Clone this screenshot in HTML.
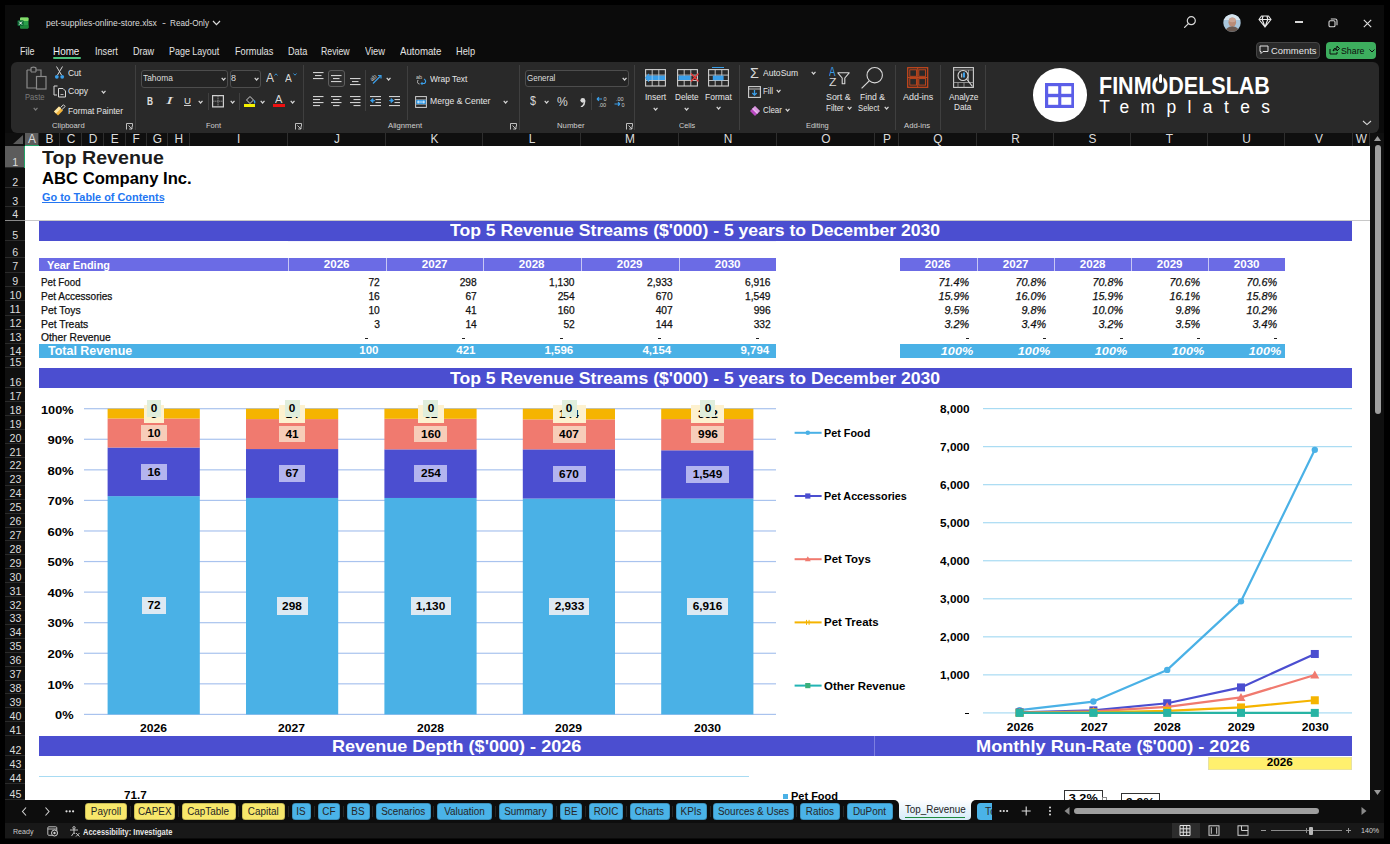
<!DOCTYPE html>
<html><head><meta charset="utf-8">
<style>
*{margin:0;padding:0;box-sizing:border-box}
html,body{width:1390px;height:844px;overflow:hidden;background:#000}
body{position:relative;font-family:"Liberation Sans",sans-serif}
.a{position:absolute}
.ui{color:#e6e6e6;font-size:11px;white-space:nowrap}
.t{position:absolute;white-space:nowrap;line-height:1}
.w{-webkit-text-stroke:0.25px currentColor}
.rib{position:absolute;left:11px;top:61.5px;width:1368px;height:71px;background:#292929;border-radius:6px}
.sep{position:absolute;width:1px;background:#3d3d3d}
.gl{position:absolute;font-size:9.5px;color:#d0d0d0;white-space:nowrap;line-height:1}
.ch{position:absolute;top:133px;height:13px;background:#0f0f0f;color:#d9d9d9;font-size:11px;text-align:center;line-height:13px;border-right:1px solid #333}
.rh{position:absolute;left:5px;width:20px;background:#0f0f0f;color:#d9d9d9;font-size:11px;text-align:center;border-bottom:1px solid #2d2d2d}
.cell{position:absolute;font-family:"Liberation Sans",sans-serif;white-space:nowrap;line-height:1}
.tab{position:absolute;top:802.5px;height:17.5px;border-radius:4px;font-size:11.5px;color:#1a1a1a;text-align:center;line-height:17.5px}
</style></head><body>

<div class="a" style="left:5px;top:5px;width:1379px;height:833.5px;background:#0b0b0b"></div>
<svg class="a" style="left:16.5px;top:16.5px" width="12" height="12" viewBox="0 0 12 12"><rect x="3" y="0.5" width="8.5" height="11" rx="1" fill="#2aa14a"/><rect x="3" y="0.5" width="8.5" height="3.6" rx="1" fill="#86dc6a"/><rect x="3" y="8" width="8.5" height="3.5" rx="1" fill="#1f8a3c"/><rect x="0.5" y="3.2" width="6.2" height="5.8" rx="1" fill="#0d6b35"/><path d="M2.2 4.6 L5 7.6 M5 4.6 L2.2 7.6" stroke="#fff" stroke-width="1"/></svg>
<div class="t" style="left:45.60px;top:17.90px;font-size:9.45px;color:#dcdcdc;transform:scaleX(0.9073);transform-origin:left;">pet-supplies-online-store.xlsx</div>
<div class="t" style="left:161.50px;top:17.90px;font-size:9.45px;color:#dcdcdc;transform:scaleX(1.2715);transform-origin:left;">-</div>
<div class="t" style="left:169.70px;top:17.90px;font-size:9.45px;color:#dcdcdc;transform:scaleX(0.8637);transform-origin:left;">Read-Only</div>
<svg class="a" style="left:212px;top:20px" width="9" height="6" viewBox="0 0 9 6"><path d="M1 1 L4.5 4.6 L8 1" stroke="#dcdcdc" stroke-width="1.2" fill="none"/></svg>
<svg class="a" style="left:1183px;top:15px" width="14" height="14" viewBox="0 0 14 14"><circle cx="8.3" cy="5.7" r="4" stroke="#d8d8d8" stroke-width="1.2" fill="none"/><path d="M5.4 8.6 L1.6 12.4" stroke="#d8d8d8" stroke-width="1.3" stroke-linecap="round"/></svg>
<svg class="a" style="left:1222.5px;top:13.5px" width="18" height="18" viewBox="0 0 18 18"><defs><clipPath id="av"><circle cx="9" cy="9" r="8.7"/></clipPath></defs><g clip-path="url(#av)"><rect width="18" height="18" fill="#a9c6dc"/><rect y="0" width="18" height="6" fill="#d6e4ee"/><ellipse cx="9.3" cy="8.2" rx="3.8" ry="4.8" fill="#b98c78"/><ellipse cx="9.3" cy="6" rx="3.4" ry="2.2" fill="#caa595"/><path d="M2 18 Q3 12.5 9.3 12.5 Q15.5 12.5 16.5 18 Z" fill="#6a5a52"/></g></svg>
<svg class="a" style="left:1258px;top:15px" width="14" height="13" viewBox="0 0 14 13"><path d="M3.5 1 H10.5 L13 4.5 L7 12 L1 4.5 Z M1 4.5 H13 M5 1 L4.2 4.5 L7 12 L9.8 4.5 L9 1" stroke="#e8e8e8" stroke-width="1.2" fill="none" stroke-linejoin="round"/></svg>
<div class="a" style="left:1295px;top:21.3px;width:7.6px;height:1.6px;background:#d8d8d8"></div>
<svg class="a" style="left:1328px;top:18px" width="10" height="10" viewBox="0 0 10 10"><rect x="1" y="2.8" width="6" height="6" rx="1.3" stroke="#d8d8d8" stroke-width="1.1" fill="none"/><path d="M2.8 1 H7.2 Q9 1 9 2.8 V7.2" stroke="#d8d8d8" stroke-width="1.1" fill="none"/></svg>
<svg class="a" style="left:1363px;top:18.5px" width="9" height="9" viewBox="0 0 9 9"><path d="M0.8 0.8 L8.2 8.2 M8.2 0.8 L0.8 8.2" stroke="#e0e0e0" stroke-width="1.1"/></svg>
<div class="t" style="left:20.30px;top:46.79px;font-size:10.17px;color:#e2e2e2;transform:scaleX(0.8845);transform-origin:left;">File</div>
<div class="t" style="left:53.40px;top:46.79px;font-size:10.17px;color:#f0f0f0;transform:scaleX(0.9728);transform-origin:left;">Home</div>
<div class="t" style="left:94.80px;top:46.79px;font-size:10.17px;color:#e2e2e2;transform:scaleX(0.8961);transform-origin:left;">Insert</div>
<div class="t" style="left:132.80px;top:46.79px;font-size:10.17px;color:#e2e2e2;transform:scaleX(0.8930);transform-origin:left;">Draw</div>
<div class="t" style="left:169.20px;top:46.79px;font-size:10.17px;color:#e2e2e2;transform:scaleX(0.8787);transform-origin:left;">Page Layout</div>
<div class="t" style="left:235.30px;top:46.79px;font-size:10.17px;color:#e2e2e2;transform:scaleX(0.9057);transform-origin:left;">Formulas</div>
<div class="t" style="left:287.70px;top:46.79px;font-size:10.17px;color:#e2e2e2;transform:scaleX(0.8981);transform-origin:left;">Data</div>
<div class="t" style="left:321.40px;top:46.79px;font-size:10.17px;color:#e2e2e2;transform:scaleX(0.8573);transform-origin:left;">Review</div>
<div class="t" style="left:365.00px;top:46.79px;font-size:10.17px;color:#e2e2e2;transform:scaleX(0.9146);transform-origin:left;">View</div>
<div class="t" style="left:399.60px;top:46.79px;font-size:10.17px;color:#e2e2e2;transform:scaleX(0.9530);transform-origin:left;">Automate</div>
<div class="t" style="left:455.70px;top:46.79px;font-size:10.17px;color:#e2e2e2;transform:scaleX(0.9128);transform-origin:left;">Help</div>
<div class="a" style="left:53.4px;top:57.3px;width:27.8px;height:1.8px;background:#4cc27a;border-radius:1px"></div>
<div class="a" style="left:1255.5px;top:41.5px;width:64px;height:17px;border-radius:4px;background:#2a2a2a;border:1px solid #454545"></div>
<svg class="a" style="left:1259px;top:45px" width="10" height="10" viewBox="0 0 10 10"><path d="M1 1 H9 V6.5 H4 L2 8.5 V6.5 H1 Z" stroke="#e0e0e0" stroke-width="1" fill="none" stroke-linejoin="round"/></svg>
<div class="t" style="left:1270.50px;top:45.93px;font-size:9.88px;color:#e6e6e6;transform:scaleX(0.9523);transform-origin:left;">Comments</div>
<div class="a" style="left:1326px;top:41.5px;width:50px;height:17px;border-radius:4px;background:#3dae5e"></div>
<svg class="a" style="left:1329px;top:45px" width="11" height="10" viewBox="0 0 11 10"><path d="M1 4 V9 H8 V7 M4 6 Q4 3 8 3 V1 L10.5 3.5 L8 6 V4.5 Q5.5 4.5 4 6" stroke="#0d0d0d" stroke-width="1" fill="none" stroke-linejoin="round"/></svg>
<div class="t" style="left:1341.00px;top:45.93px;font-size:9.88px;color:#0d0d0d;transform:scaleX(0.8911);transform-origin:left;">Share</div>
<svg class="a" style="left:1369px;top:49px" width="6" height="4" viewBox="0 0 6 4"><path d="M0.5 0.5 L3 3 L5.5 0.5" stroke="#0d0d0d" stroke-width="1" fill="none"/></svg>
<div class="rib"></div>
<svg class="a" style="left:25px;top:66px" width="23" height="25" viewBox="0 0 23 25"><path d="M2 4 H6 V2.5 Q6 1.2 8.5 1.2 Q11 1.2 11 2.5 V4 H16 V10" stroke="#8a8a8a" stroke-width="1.2" fill="none"/><path d="M2 4 V22 H11" stroke="#8a8a8a" stroke-width="1.2" fill="none"/><path d="M6 4 V6 H11 V4" stroke="#8a8a8a" stroke-width="1" fill="none"/><rect x="11.5" y="10.5" width="9.5" height="12.5" stroke="#8a8a8a" stroke-width="1.2" fill="none"/></svg>
<div class="t" style="left:24.70px;top:93.44px;font-size:8.58px;color:#7c7c7c;transform:scaleX(0.8893);transform-origin:left;">Paste</div>
<svg class="a" style="left:32.5px;top:106.5px" width="5.2" height="4" viewBox="0 0 5.2 4"><path d="M0.7 0.8 L2.6 3 L4.5 0.8" stroke="#7a7a7a" stroke-width="1.2" fill="none"/></svg>
<svg class="a" style="left:54px;top:66px" width="11" height="14" viewBox="0 0 11 14"><path d="M2.5 0.5 L7.5 9 M8.5 0.5 L3.5 9" stroke="#d8d8d8" stroke-width="1"/><circle cx="2.8" cy="10.8" r="1.9" fill="#3a9ee8"/><circle cx="8.2" cy="10.8" r="1.9" fill="#3a9ee8"/></svg>
<div class="t" style="left:67.90px;top:69.06px;font-size:8.43px;color:#e6e6e6;transform:scaleX(1.0062);transform-origin:left;">Cut</div>
<svg class="a" style="left:52.5px;top:85px" width="14" height="13" viewBox="0 0 14 13"><path d="M4.5 1 H1 V10 H4" stroke="#d8d8d8" stroke-width="1" fill="none"/><path d="M5.5 3.5 H10 L12.5 6 V12 H5.5 Z" stroke="#d8d8d8" stroke-width="1" fill="none"/><path d="M7.5 9.5 H10.5" stroke="#d8d8d8" stroke-width="0.8"/></svg>
<div class="t" style="left:67.90px;top:87.26px;font-size:8.43px;color:#e6e6e6;transform:scaleX(1.0214);transform-origin:left;">Copy</div>
<svg class="a" style="left:100.5px;top:89.8px" width="5.2" height="4" viewBox="0 0 5.2 4"><path d="M0.7 0.8 L2.6 3 L4.5 0.8" stroke="#d6d6d6" stroke-width="1.2" fill="none"/></svg>
<svg class="a" style="left:53px;top:103.5px" width="13" height="12" viewBox="0 0 13 12"><path d="M1 7.5 L6 2.5 L10 6.5 L5 11.5 Z" fill="#f2b43c"/><path d="M1 7.5 L6 2.5 L8 4.5 L3 9.5 Z" fill="#fce6a6"/><path d="M7.5 3.5 L10.5 0.8 L12.2 2.5 L9 5.5" stroke="#d8d8d8" stroke-width="1" fill="none"/></svg>
<div class="t" style="left:67.90px;top:106.56px;font-size:8.43px;color:#e6e6e6;transform:scaleX(0.9866);transform-origin:left;">Format Painter</div>
<div class="t" style="left:52.00px;top:121.68px;font-size:7.70px;color:#cfcfcf;transform:scaleX(0.9918);transform-origin:left;">Clipboard</div>
<svg class="a" style="left:126.2px;top:122.6px" width="7" height="7" viewBox="0 0 7 7"><path d="M0.5 6.5 V0.5 H6.5 V3.5" stroke="#cfcfcf" stroke-width="0.9" fill="none"/><path d="M2.5 2.5 L6 6 M3.2 6 H6 V3.2" stroke="#cfcfcf" stroke-width="0.9" fill="none"/></svg>
<div class="a" style="left:135.0px;top:64.5px;width:1px;height:65.5px;background:#3f3f3f"></div>
<div class="a" style="left:141.2px;top:70px;width:86.7px;height:17.5px;border:1px solid #4d4d4d;border-radius:3px;background:#242424"></div>
<div class="t" style="left:143.30px;top:74.03px;font-size:9.30px;color:#dedede;transform:scaleX(0.9036);transform-origin:left;">Tahoma</div>
<svg class="a" style="left:221.3px;top:77.2px" width="5.2" height="4" viewBox="0 0 5.2 4"><path d="M0.7 0.8 L2.6 3 L4.5 0.8" stroke="#d6d6d6" stroke-width="1.2" fill="none"/></svg>
<div class="a" style="left:229.6px;top:70px;width:31px;height:17.5px;border:1px solid #4d4d4d;border-radius:3px;background:#242424"></div>
<div class="t" style="left:231.00px;top:74.03px;font-size:9.30px;color:#dedede;transform:scaleX(0.9666);transform-origin:left;">8</div>
<svg class="a" style="left:253.7px;top:77.0px" width="5.2" height="4" viewBox="0 0 5.2 4"><path d="M0.7 0.8 L2.6 3 L4.5 0.8" stroke="#d6d6d6" stroke-width="1.2" fill="none"/></svg>
<div class="t" style="left:265.50px;top:71.03px;font-size:13.08px;color:#d8d8d8;transform:scaleX(0.9168);transform-origin:left;">A</div>
<svg class="a" style="left:273.5px;top:72.5px" width="4" height="3" viewBox="0 0 4 3"><path d="M0.5 2.5 L2 0.8 L3.5 2.5" stroke="#3a9ee8" stroke-width="0.9" fill="none"/></svg>
<div class="t" style="left:285.20px;top:72.75px;font-size:11.05px;color:#d8d8d8;transform:scaleX(0.9229);transform-origin:left;">A</div>
<svg class="a" style="left:292.5px;top:73px" width="4" height="3" viewBox="0 0 4 3"><path d="M0.5 0.5 L2 2.2 L3.5 0.5" stroke="#3a9ee8" stroke-width="0.9" fill="none"/></svg>
<div class="t" style="left:146.90px;top:95.72px;font-size:10.61px;color:#e0e0e0;font-weight:bold;transform:scaleX(0.7830);transform-origin:left;">B</div>
<div class="t" style="left:166.20px;top:95.72px;font-size:10.61px;color:#e0e0e0;font-style:italic;transform:scaleX(1.9337);transform-origin:left;font-family:'Liberation Serif'">I</div>
<div class="t" style="left:183.50px;top:95.83px;font-size:9.88px;color:#e0e0e0;transform:scaleX(0.9667);transform-origin:left;">U</div>
<div class="a" style="left:183.5px;top:105.4px;width:7px;height:0.9px;background:#d0d0d0"></div>
<svg class="a" style="left:198.4px;top:99.5px" width="5.2" height="4" viewBox="0 0 5.2 4"><path d="M0.7 0.8 L2.6 3 L4.5 0.8" stroke="#d6d6d6" stroke-width="1.2" fill="none"/></svg>
<div class="a" style="left:208.0px;top:93px;width:1px;height:17px;background:#3f3f3f"></div>
<svg class="a" style="left:212px;top:95px" width="12" height="12.5" viewBox="0 0 12 12.5"><path d="M0.6 0.6 H11.4 V11.9 H0.6 Z" stroke="#cfcfcf" stroke-width="1.2" fill="none"/><path d="M6 0.6 V11.9 M0.6 6.2 H11.4" stroke="#a8a8a8" stroke-width="0.9" stroke-dasharray="1.2 0.8"/></svg>
<svg class="a" style="left:230.0px;top:99.5px" width="5.2" height="4" viewBox="0 0 5.2 4"><path d="M0.7 0.8 L2.6 3 L4.5 0.8" stroke="#d6d6d6" stroke-width="1.2" fill="none"/></svg>
<div class="a" style="left:239.0px;top:93px;width:1px;height:17px;background:#3f3f3f"></div>
<svg class="a" style="left:244.5px;top:94.5px" width="11" height="9.5" viewBox="0 0 11 9.5"><path d="M1.5 5 L5 1.5 L8.5 5 L5 8.5 Z" stroke="#d0d0d0" stroke-width="1" fill="none"/><path d="M9 5.5 Q10.5 7.5 9.2 8.3" stroke="#3a9ee8" stroke-width="1.3" fill="none"/></svg>
<div class="a" style="left:243.9px;top:104.3px;width:11.5px;height:3.2px;background:#f4f000"></div>
<svg class="a" style="left:260.1px;top:99.5px" width="5.2" height="4" viewBox="0 0 5.2 4"><path d="M0.7 0.8 L2.6 3 L4.5 0.8" stroke="#d6d6d6" stroke-width="1.2" fill="none"/></svg>
<div class="t" style="left:275.00px;top:94.47px;font-size:10.90px;color:#d8d8d8;transform:scaleX(1.0177);transform-origin:left;">A</div>
<div class="a" style="left:272.9px;top:104.3px;width:11.9px;height:3.2px;background:#ee1111"></div>
<svg class="a" style="left:289.5px;top:99.5px" width="5.2" height="4" viewBox="0 0 5.2 4"><path d="M0.7 0.8 L2.6 3 L4.5 0.8" stroke="#d6d6d6" stroke-width="1.2" fill="none"/></svg>
<div class="t" style="left:205.70px;top:121.98px;font-size:7.70px;color:#cfcfcf;transform:scaleX(0.9732);transform-origin:left;">Font</div>
<svg class="a" style="left:294.5px;top:122.5px" width="7" height="7" viewBox="0 0 7 7"><path d="M0.5 6.5 V0.5 H6.5 V3.5" stroke="#cfcfcf" stroke-width="0.9" fill="none"/><path d="M2.5 2.5 L6 6 M3.2 6 H6 V3.2" stroke="#cfcfcf" stroke-width="0.9" fill="none"/></svg>
<div class="a" style="left:302.8px;top:64.5px;width:1px;height:65.5px;background:#3f3f3f"></div>
<svg class="a" style="left:312.5px;top:72.3px" width="12" height="12" viewBox="0 0 12 12"><rect x="0" y="0" width="10.5" height="1.1" fill="#d0d0d0"/><rect x="2" y="3" width="6.5" height="1.1" fill="#d0d0d0"/><rect x="0" y="6" width="10.5" height="1.1" fill="#d0d0d0"/></svg>
<div class="a" style="left:328.2px;top:70px;width:17.2px;height:17.4px;border:1px solid #5c5c5c;border-radius:3px;background:#2e2e2e"></div>
<svg class="a" style="left:331px;top:74.5px" width="12" height="12" viewBox="0 0 12 12"><rect x="0" y="0" width="10.5" height="1.1" fill="#d0d0d0"/><rect x="2" y="3" width="6.5" height="1.1" fill="#d0d0d0"/><rect x="0" y="6" width="10.5" height="1.1" fill="#d0d0d0"/></svg>
<svg class="a" style="left:350px;top:77.5px" width="12" height="12" viewBox="0 0 12 12"><rect x="0" y="0" width="10.5" height="1.1" fill="#d0d0d0"/><rect x="2" y="3" width="6.5" height="1.1" fill="#d0d0d0"/><rect x="0" y="6" width="10.5" height="1.1" fill="#d0d0d0"/></svg>
<div class="a" style="left:364.9px;top:70px;width:1px;height:41px;background:#3f3f3f"></div>
<svg class="a" style="left:369px;top:72px" width="14" height="13" viewBox="0 0 14 13"><text x="1" y="8" font-size="6" fill="#d0d0d0" font-family="Liberation Sans" transform="rotate(-45 4 6)">ab</text><path d="M4 11.5 L11.5 4" stroke="#3a9ee8" stroke-width="1.2"/><path d="M9 3.5 L12 3.5 L12 6.5" stroke="#3a9ee8" stroke-width="1.2" fill="none"/></svg>
<svg class="a" style="left:385.5px;top:76.7px" width="5.2" height="4" viewBox="0 0 5.2 4"><path d="M0.7 0.8 L2.6 3 L4.5 0.8" stroke="#d6d6d6" stroke-width="1.2" fill="none"/></svg>
<svg class="a" style="left:312.7px;top:96px" width="12" height="12" viewBox="0 0 12 12"><rect x="0" y="0" width="10.5" height="1.1" fill="#d0d0d0"/><rect x="0" y="3" width="7" height="1.1" fill="#d0d0d0"/><rect x="0" y="6" width="10.5" height="1.1" fill="#d0d0d0"/><rect x="0" y="9" width="7" height="1.1" fill="#d0d0d0"/></svg>
<svg class="a" style="left:331px;top:96px" width="12" height="12" viewBox="0 0 12 12"><rect x="0" y="0" width="10.5" height="1.1" fill="#d0d0d0"/><rect x="2" y="3" width="6.5" height="1.1" fill="#d0d0d0"/><rect x="0" y="6" width="10.5" height="1.1" fill="#d0d0d0"/><rect x="2" y="9" width="6.5" height="1.1" fill="#d0d0d0"/></svg>
<svg class="a" style="left:350px;top:96px" width="12" height="12" viewBox="0 0 12 12"><rect x="0" y="0" width="10.5" height="1.1" fill="#d0d0d0"/><rect x="3.5" y="3" width="7" height="1.1" fill="#d0d0d0"/><rect x="0" y="6" width="10.5" height="1.1" fill="#d0d0d0"/><rect x="3.5" y="9" width="7" height="1.1" fill="#d0d0d0"/></svg>
<div class="a" style="left:364.9px;top:93px;width:1px;height:17px;background:#3f3f3f"></div>
<svg class="a" style="left:370px;top:96px" width="12" height="11" viewBox="0 0 12 11"><rect x="0" y="0" width="11" height="1.1" fill="#d0d0d0"/><rect x="5.5" y="3" width="5.5" height="1.1" fill="#d0d0d0"/><rect x="5.5" y="6" width="5.5" height="1.1" fill="#d0d0d0"/><rect x="0" y="9" width="11" height="1.1" fill="#d0d0d0"/><path d="M0.5 4.6 L3 2.6 V6.6 Z M2.5 4.6 H5" fill="#3a9ee8" stroke="#3a9ee8" stroke-width="0.9"/></svg>
<svg class="a" style="left:389px;top:96px" width="12" height="11" viewBox="0 0 12 11"><rect x="0" y="0" width="11" height="1.1" fill="#d0d0d0"/><rect x="5.5" y="3" width="5.5" height="1.1" fill="#d0d0d0"/><rect x="5.5" y="6" width="5.5" height="1.1" fill="#d0d0d0"/><rect x="0" y="9" width="11" height="1.1" fill="#d0d0d0"/><path d="M4.5 4.6 L2 2.6 V6.6 Z M0 4.6 H2.5" fill="#3a9ee8" stroke="#3a9ee8" stroke-width="0.9"/></svg>
<div class="a" style="left:407.0px;top:66px;width:1px;height:54px;background:#3f3f3f"></div>
<svg class="a" style="left:416px;top:72.5px" width="12" height="12" viewBox="0 0 12 12"><text x="0" y="5.5" font-size="5.5" fill="#d0d0d0" font-family="Liberation Sans">ab</text><path d="M2 7 Q0.5 10.5 3.5 11" stroke="#c0c0c0" stroke-width="1" fill="none"/><path d="M8 6 Q11 8 8.5 10.5 H5" stroke="#3a9ee8" stroke-width="1.2" fill="none"/><path d="M6.5 9 L5 10.5 L6.5 12" stroke="#3a9ee8" stroke-width="1" fill="none"/></svg>
<div class="t" style="left:429.60px;top:74.56px;font-size:8.43px;color:#e6e6e6;transform:scaleX(0.9937);transform-origin:left;">Wrap Text</div>
<svg class="a" style="left:414.5px;top:95.5px" width="12" height="12" viewBox="0 0 12 12"><rect x="0.6" y="0.6" width="10.8" height="10.8" stroke="#d0d0d0" stroke-width="1" fill="none"/><rect x="1.2" y="3.8" width="9.6" height="4.4" fill="#3a9ee8"/><path d="M0.6 3.5 H11.4 M0.6 8.5 H11.4" stroke="#a0a0a0" stroke-width="0.6"/><path d="M2.5 6 H9.5 M2.5 6 L4 4.8 M2.5 6 L4 7.2 M9.5 6 L8 4.8 M9.5 6 L8 7.2" stroke="#fff" stroke-width="0.7" fill="none"/></svg>
<div class="t" style="left:429.60px;top:97.46px;font-size:8.43px;color:#e6e6e6;transform:scaleX(1.0168);transform-origin:left;">Merge &amp; Center</div>
<svg class="a" style="left:502.5px;top:100.0px" width="5.2" height="4" viewBox="0 0 5.2 4"><path d="M0.7 0.8 L2.6 3 L4.5 0.8" stroke="#d6d6d6" stroke-width="1.2" fill="none"/></svg>
<div class="t" style="left:388.00px;top:121.78px;font-size:7.70px;color:#cfcfcf;">Alignment</div>
<svg class="a" style="left:510px;top:122.6px" width="7" height="7" viewBox="0 0 7 7"><path d="M0.5 6.5 V0.5 H6.5 V3.5" stroke="#cfcfcf" stroke-width="0.9" fill="none"/><path d="M2.5 2.5 L6 6 M3.2 6 H6 V3.2" stroke="#cfcfcf" stroke-width="0.9" fill="none"/></svg>
<div class="a" style="left:518.8px;top:64.5px;width:1px;height:65.5px;background:#3f3f3f"></div>
<div class="a" style="left:525.3px;top:70px;width:104.1px;height:17.3px;border:1px solid #4d4d4d;border-radius:3px;background:#242424"></div>
<div class="t" style="left:526.80px;top:73.95px;font-size:9.16px;color:#dedede;transform:scaleX(0.8718);transform-origin:left;">General</div>
<svg class="a" style="left:622.4px;top:76.8px" width="5.2" height="4" viewBox="0 0 5.2 4"><path d="M0.7 0.8 L2.6 3 L4.5 0.8" stroke="#d6d6d6" stroke-width="1.2" fill="none"/></svg>
<div class="t" style="left:530.10px;top:95.14px;font-size:12.35px;color:#d8d8d8;transform:scaleX(0.8733);transform-origin:left;">$</div>
<svg class="a" style="left:544.3px;top:100.0px" width="5.2" height="4" viewBox="0 0 5.2 4"><path d="M0.7 0.8 L2.6 3 L4.5 0.8" stroke="#d6d6d6" stroke-width="1.2" fill="none"/></svg>
<div class="t" style="left:557.30px;top:94.58px;font-size:13.37px;color:#d8d8d8;transform:scaleX(0.9083);transform-origin:left;">%</div>
<svg class="a" style="left:578.5px;top:96.5px" width="7" height="10.5" viewBox="0 0 7 10.5"><circle cx="3.8" cy="3.3" r="2.4" fill="#d8d8d8"/><path d="M5.6 3.8 Q5.8 8 2 10" stroke="#d8d8d8" stroke-width="1.6" fill="none"/></svg>
<div class="a" style="left:590.9px;top:93px;width:1px;height:17px;background:#3f3f3f"></div>
<svg class="a" style="left:596px;top:96px" width="12.5" height="11" viewBox="0 0 12.5 11"><path d="M1 3 H6 M1 3 L3 1.2 M1 3 L3 4.8" stroke="#3a9ee8" stroke-width="1.2" fill="none"/><text x="7.5" y="5" font-size="5.5" fill="#d0d0d0" font-family="Liberation Sans">0</text><text x="2.5" y="10.5" font-size="5.5" fill="#d0d0d0" font-family="Liberation Sans">.00</text></svg>
<svg class="a" style="left:614px;top:96px" width="12.5" height="11" viewBox="0 0 12.5 11"><text x="2" y="5" font-size="5.5" fill="#d0d0d0" font-family="Liberation Sans">.00</text><path d="M0.5 8 H6 M6 8 L4 6.2 M6 8 L4 9.8" stroke="#3a9ee8" stroke-width="1.2" fill="none"/><text x="7.5" y="10.5" font-size="5.5" fill="#d0d0d0" font-family="Liberation Sans">0</text></svg>
<div class="t" style="left:556.90px;top:121.78px;font-size:7.70px;color:#cfcfcf;transform:scaleX(1.0074);transform-origin:left;">Number</div>
<svg class="a" style="left:626px;top:122.6px" width="7" height="7" viewBox="0 0 7 7"><path d="M0.5 6.5 V0.5 H6.5 V3.5" stroke="#cfcfcf" stroke-width="0.9" fill="none"/><path d="M2.5 2.5 L6 6 M3.2 6 H6 V3.2" stroke="#cfcfcf" stroke-width="0.9" fill="none"/></svg>
<div class="a" style="left:634.1px;top:64.5px;width:1px;height:65.5px;background:#3f3f3f"></div>
<svg class="a" style="left:645.2px;top:69px" width="24" height="19" viewBox="0 0 24 19"><rect x="0.6" y="0.6" width="19.8" height="16.4" stroke="#cfcfcf" stroke-width="1.1" fill="none"/><path d="M7.2 0.6 V17 M13.8 0.6 V17 M0.6 6.1 H20.4 M0.6 11.5 H20.4" stroke="#cfcfcf" stroke-width="0.9"/><rect x="1.5" y="6.6" width="18.5" height="4.4" fill="#3a9ee8"/><path d="M4 5 L0.8 8.8 L4 12.6" stroke="#3a9ee8" stroke-width="1.2" fill="none"/><path d="M7.2 6.6 V11 M13.8 6.6 V11" stroke="#bcdcf8" stroke-width="0.6"/></svg>
<div class="t" style="left:645.20px;top:93.46px;font-size:8.43px;color:#e6e6e6;transform:scaleX(1.0056);transform-origin:left;">Insert</div>
<svg class="a" style="left:652.5px;top:106.7px" width="5.2" height="4" viewBox="0 0 5.2 4"><path d="M0.7 0.8 L2.6 3 L4.5 0.8" stroke="#d6d6d6" stroke-width="1.2" fill="none"/></svg>
<svg class="a" style="left:676.7px;top:69px" width="24" height="19" viewBox="0 0 24 19"><rect x="0.6" y="0.6" width="19.8" height="16.4" stroke="#cfcfcf" stroke-width="1.1" fill="none"/><path d="M7.2 0.6 V17 M13.8 0.6 V17 M0.6 6.1 H20.4 M0.6 11.5 H20.4" stroke="#cfcfcf" stroke-width="0.9"/><rect x="1.5" y="6.6" width="12" height="4.4" fill="#3a9ee8"/><path d="M14 4.5 L21.5 12.5 M21.5 4.5 L14 12.5" stroke="#e83a3a" stroke-width="1.3"/></svg>
<div class="t" style="left:675.10px;top:93.46px;font-size:8.43px;color:#e6e6e6;transform:scaleX(0.9685);transform-origin:left;">Delete</div>
<svg class="a" style="left:684.0px;top:106.7px" width="5.2" height="4" viewBox="0 0 5.2 4"><path d="M0.7 0.8 L2.6 3 L4.5 0.8" stroke="#d6d6d6" stroke-width="1.2" fill="none"/></svg>
<svg class="a" style="left:708.3px;top:69px" width="24" height="19" viewBox="0 0 24 19"><rect x="0.6" y="0.6" width="19.8" height="16.4" stroke="#cfcfcf" stroke-width="1.1" fill="none"/><path d="M7.2 0.6 V17 M13.8 0.6 V17 M0.6 6.1 H20.4 M0.6 11.5 H20.4" stroke="#cfcfcf" stroke-width="0.9"/><rect x="4.8" y="6.6" width="10.8" height="4.6" fill="#3a9ee8"/></svg>
<div class="a" style="left:712px;top:66.6px;width:12px;height:1.2px;background:#3a9ee8"></div>
<div class="t" style="left:705.40px;top:92.66px;font-size:8.43px;color:#e6e6e6;transform:scaleX(1.0076);transform-origin:left;">Format</div>
<svg class="a" style="left:715.5px;top:105.7px" width="5.2" height="4" viewBox="0 0 5.2 4"><path d="M0.7 0.8 L2.6 3 L4.5 0.8" stroke="#d6d6d6" stroke-width="1.2" fill="none"/></svg>
<div class="t" style="left:678.80px;top:121.88px;font-size:7.70px;color:#cfcfcf;transform:scaleX(0.9461);transform-origin:left;">Cells</div>
<div class="a" style="left:738.9px;top:64.5px;width:1px;height:65.5px;background:#3f3f3f"></div>
<div class="t" style="left:749.80px;top:65.90px;font-size:14.53px;color:#d8d8d8;transform:scaleX(0.9906);transform-origin:left;">Σ</div>
<div class="t" style="left:762.90px;top:69.36px;font-size:8.43px;color:#e6e6e6;transform:scaleX(1.0180);transform-origin:left;">AutoSum</div>
<svg class="a" style="left:811.4px;top:71.2px" width="5.2" height="4" viewBox="0 0 5.2 4"><path d="M0.7 0.8 L2.6 3 L4.5 0.8" stroke="#d6d6d6" stroke-width="1.2" fill="none"/></svg>
<svg class="a" style="left:747.5px;top:85.5px" width="13.5" height="12" viewBox="0 0 13.5 12"><rect x="0.6" y="0.6" width="11.8" height="10.8" stroke="#cfcfcf" stroke-width="1.1" fill="none"/><path d="M0.6 3 H12.4" stroke="#cfcfcf" stroke-width="0.9"/><path d="M6.5 4 V9 M4.3 7 L6.5 9.2 L8.7 7" stroke="#3a9ee8" stroke-width="1.3" fill="none"/></svg>
<div class="t" style="left:763.20px;top:87.16px;font-size:8.43px;color:#e6e6e6;transform:scaleX(0.9287);transform-origin:left;">Fill</div>
<svg class="a" style="left:775.7px;top:89.2px" width="5.2" height="4" viewBox="0 0 5.2 4"><path d="M0.7 0.8 L2.6 3 L4.5 0.8" stroke="#d6d6d6" stroke-width="1.2" fill="none"/></svg>
<svg class="a" style="left:748.5px;top:104.5px" width="12" height="11.5" viewBox="0 0 12 11.5"><path d="M1 6 L6 1 L11 6 L6 11 Z" fill="#b848c0"/><path d="M3.5 3.5 L8.5 8.5" stroke="#e8b8ef" stroke-width="1.2"/><path d="M6 1 L11 6 L8.5 8.5 L3.5 3.5 Z" fill="#f0d0f4" opacity="0.6"/></svg>
<div class="t" style="left:762.90px;top:106.16px;font-size:8.43px;color:#e6e6e6;transform:scaleX(0.9382);transform-origin:left;">Clear</div>
<svg class="a" style="left:784.7px;top:108.2px" width="5.2" height="4" viewBox="0 0 5.2 4"><path d="M0.7 0.8 L2.6 3 L4.5 0.8" stroke="#d6d6d6" stroke-width="1.2" fill="none"/></svg>
<div class="t" style="left:829.20px;top:66.29px;font-size:12.06px;color:#3a9ee8;transform:scaleX(0.8078);transform-origin:left;">A</div>
<div class="t" style="left:829.20px;top:76.46px;font-size:11.63px;color:#d8d8d8;transform:scaleX(1.0560);transform-origin:left;">Z</div>
<svg class="a" style="left:836.5px;top:72px" width="13" height="12.5" viewBox="0 0 13 12.5"><path d="M0.8 0.8 H12.2 L7.8 6 V11.8 H5.2 V6 Z" stroke="#d8d8d8" stroke-width="1.1" fill="none" stroke-linejoin="round"/></svg>
<div class="t" style="left:826.40px;top:92.76px;font-size:8.43px;color:#e6e6e6;transform:scaleX(1.0501);transform-origin:left;">Sort &amp;</div>
<div class="t" style="left:825.90px;top:103.96px;font-size:8.43px;color:#e6e6e6;transform:scaleX(0.9502);transform-origin:left;">Filter</div>
<svg class="a" style="left:847.1px;top:106.2px" width="5.2" height="4" viewBox="0 0 5.2 4"><path d="M0.7 0.8 L2.6 3 L4.5 0.8" stroke="#d6d6d6" stroke-width="1.2" fill="none"/></svg>
<svg class="a" style="left:860px;top:66px" width="24" height="24" viewBox="0 0 24 24"><circle cx="14.7" cy="9.2" r="7.7" stroke="#d8d8d8" stroke-width="1.1" fill="none"/><path d="M9.2 14.8 L1.6 22.4" stroke="#d8d8d8" stroke-width="1.2"/></svg>
<div class="t" style="left:859.90px;top:92.76px;font-size:8.43px;color:#e6e6e6;transform:scaleX(1.0261);transform-origin:left;">Find &amp;</div>
<div class="t" style="left:858.00px;top:103.96px;font-size:8.43px;color:#e6e6e6;transform:scaleX(0.9134);transform-origin:left;">Select</div>
<svg class="a" style="left:883.5px;top:106.2px" width="5.2" height="4" viewBox="0 0 5.2 4"><path d="M0.7 0.8 L2.6 3 L4.5 0.8" stroke="#d6d6d6" stroke-width="1.2" fill="none"/></svg>
<div class="t" style="left:805.80px;top:121.78px;font-size:7.70px;color:#cfcfcf;transform:scaleX(0.9680);transform-origin:left;">Editing</div>
<div class="a" style="left:894.5px;top:64.5px;width:1px;height:65.5px;background:#3f3f3f"></div>
<svg class="a" style="left:907px;top:67px" width="21.5" height="21" viewBox="0 0 21.5 21"><rect x="0.7" y="0.7" width="20" height="19.6" stroke="#c9481c" stroke-width="1.2" fill="none"/><rect x="2.8" y="2.8" width="6.8" height="6.5" stroke="#c9481c" stroke-width="0.9" fill="none"/><rect x="11.8" y="2.8" width="6.8" height="6.5" stroke="#c9481c" stroke-width="0.9" fill="none"/><rect x="2.8" y="11.6" width="6.8" height="6.5" stroke="#c9481c" stroke-width="0.9" fill="none"/><rect x="11.8" y="11.6" width="6.8" height="6.5" stroke="#c9481c" stroke-width="0.9" fill="none"/><path d="M10.7 0.7 V20.3 M0.7 10.5 H20.7" stroke="#c9481c" stroke-width="0.9"/></svg>
<div class="t" style="left:902.90px;top:92.66px;font-size:8.43px;color:#e6e6e6;transform:scaleX(1.0601);transform-origin:left;">Add-ins</div>
<div class="t" style="left:904.10px;top:121.88px;font-size:7.70px;color:#cfcfcf;">Add-ins</div>
<div class="a" style="left:940.1px;top:64.5px;width:1px;height:65.5px;background:#3f3f3f"></div>
<svg class="a" style="left:952.5px;top:67px" width="21" height="21" viewBox="0 0 21 21"><rect x="0.6" y="0.6" width="19.8" height="19.8" stroke="#cfcfcf" stroke-width="1.1" fill="none"/><path d="M0.6 3 H20.4 M0.6 15.5 H20.4 M5 15.5 V20.4 M11 15.5 V20.4 M15.5 3 V15.5" stroke="#a8a8a8" stroke-width="0.8"/><circle cx="10" cy="8.5" r="5" stroke="#d8d8d8" stroke-width="1.1" fill="#2a2a2a"/><path d="M13.6 12 L19.5 19.5" stroke="#d8d8d8" stroke-width="1.2"/><rect x="8" y="6.5" width="1.3" height="4" fill="#bbb"/><rect x="10" y="5.5" width="2" height="5" fill="#3a9ee8"/></svg>
<div class="t" style="left:948.50px;top:92.66px;font-size:8.43px;color:#e6e6e6;transform:scaleX(0.9836);transform-origin:left;">Analyze</div>
<div class="t" style="left:954.30px;top:103.36px;font-size:8.43px;color:#e6e6e6;transform:scaleX(0.9772);transform-origin:left;">Data</div>
<div class="a" style="left:984.5px;top:64.5px;width:1px;height:65.5px;background:#3f3f3f"></div>
<div class="a" style="left:1032.6px;top:68.2px;width:54.4px;height:54px;border-radius:50%;background:#fff"></div>
<svg class="a" style="left:1044.9px;top:82.8px" width="29.5" height="25" viewBox="0 0 29.5 25"><rect x="0" y="0" width="29.5" height="25" fill="#5b5ee8"/><rect x="3.2" y="3.2" width="10" height="7.6" fill="#fff"/><rect x="16.3" y="3.2" width="10" height="7.6" fill="#fff"/><rect x="3.2" y="14.2" width="10" height="7.6" fill="#fff"/><rect x="16.3" y="14.2" width="10" height="7.6" fill="#fff"/></svg>
<div class="t" style="left:1099.30px;top:74.35px;font-size:24.27px;color:#fff;font-weight:bold;transform:scaleX(0.8863);transform-origin:left;">FINMODELSLAB</div>
<div class="t" style="left:1099.30px;top:98.94px;font-size:17.44px;color:#fff;letter-spacing:11.4px">Templates</div>
<div class="a" style="left:1158.64px;top:73.8px;width:3.2px;height:9px;background:#fff;border-radius:1.5px;box-shadow:0 0 0 1.3px #292929"></div>
<svg class="a" style="left:1362px;top:120px" width="10" height="6" viewBox="0 0 10 6"><path d="M1 1 L5 4.6 L9 1" stroke="#d8d8d8" stroke-width="1.1" fill="none"/></svg>
<div class="a" style="left:5px;top:133px;width:1365px;height:13px;background:#0f0f0f"></div>
<div class="a" style="left:5px;top:146px;width:20px;height:654px;background:#0f0f0f"></div>
<div class="a" style="left:25px;top:146px;width:1345px;height:654px;background:#fff"></div>
<svg class="a" style="left:11px;top:134px" width="13" height="11" viewBox="0 0 13 11"><path d="M12 1 V10 H2 Z" fill="#5a5a5a"/></svg>
<div class="a" style="left:25px;top:133px;width:14px;height:13px;background:#5c5c5c;border-right:1px solid #2e2e2e"></div>
<div class="t" style="left:28.02px;top:134.11px;font-size:11.92px;color:#dcdcdc;">A</div>
<div class="a" style="left:39px;top:133px;width:21px;height:13px;background:#0f0f0f;border-right:1px solid #2e2e2e"></div>
<div class="t" style="left:45.52px;top:134.11px;font-size:11.92px;color:#dcdcdc;">B</div>
<div class="a" style="left:60px;top:133px;width:22px;height:13px;background:#0f0f0f;border-right:1px solid #2e2e2e"></div>
<div class="t" style="left:66.70px;top:134.11px;font-size:11.92px;color:#dcdcdc;">C</div>
<div class="a" style="left:82px;top:133px;width:22px;height:13px;background:#0f0f0f;border-right:1px solid #2e2e2e"></div>
<div class="t" style="left:88.70px;top:134.11px;font-size:11.92px;color:#dcdcdc;">D</div>
<div class="a" style="left:104px;top:133px;width:21.5px;height:13px;background:#0f0f0f;border-right:1px solid #2e2e2e"></div>
<div class="t" style="left:110.77px;top:134.11px;font-size:11.92px;color:#dcdcdc;">E</div>
<div class="a" style="left:125.5px;top:133px;width:21.5px;height:13px;background:#0f0f0f;border-right:1px solid #2e2e2e"></div>
<div class="t" style="left:132.61px;top:134.11px;font-size:11.92px;color:#dcdcdc;">F</div>
<div class="a" style="left:147px;top:133px;width:21px;height:13px;background:#0f0f0f;border-right:1px solid #2e2e2e"></div>
<div class="t" style="left:152.86px;top:134.11px;font-size:11.92px;color:#dcdcdc;">G</div>
<div class="a" style="left:168px;top:133px;width:21.5px;height:13px;background:#0f0f0f;border-right:1px solid #2e2e2e"></div>
<div class="t" style="left:174.45px;top:134.11px;font-size:11.92px;color:#dcdcdc;">H</div>
<div class="a" style="left:189.5px;top:133px;width:98.5px;height:13px;background:#0f0f0f;border-right:1px solid #2e2e2e"></div>
<div class="t" style="left:237.09px;top:134.11px;font-size:11.92px;color:#dcdcdc;">I</div>
<div class="a" style="left:288px;top:133px;width:98px;height:13px;background:#0f0f0f;border-right:1px solid #2e2e2e"></div>
<div class="t" style="left:334.02px;top:134.11px;font-size:11.92px;color:#dcdcdc;">J</div>
<div class="a" style="left:386px;top:133px;width:97px;height:13px;background:#0f0f0f;border-right:1px solid #2e2e2e"></div>
<div class="t" style="left:430.52px;top:134.11px;font-size:11.92px;color:#dcdcdc;">K</div>
<div class="a" style="left:483px;top:133px;width:98px;height:13px;background:#0f0f0f;border-right:1px solid #2e2e2e"></div>
<div class="t" style="left:528.69px;top:134.11px;font-size:11.92px;color:#dcdcdc;">L</div>
<div class="a" style="left:581px;top:133px;width:98px;height:13px;background:#0f0f0f;border-right:1px solid #2e2e2e"></div>
<div class="t" style="left:625.04px;top:134.11px;font-size:11.92px;color:#dcdcdc;">M</div>
<div class="a" style="left:679px;top:133px;width:98px;height:13px;background:#0f0f0f;border-right:1px solid #2e2e2e"></div>
<div class="t" style="left:723.70px;top:134.11px;font-size:11.92px;color:#dcdcdc;">N</div>
<div class="a" style="left:777px;top:133px;width:98px;height:13px;background:#0f0f0f;border-right:1px solid #2e2e2e"></div>
<div class="t" style="left:821.36px;top:134.11px;font-size:11.92px;color:#dcdcdc;">O</div>
<div class="a" style="left:875px;top:133px;width:24px;height:13px;background:#0f0f0f;border-right:1px solid #2e2e2e"></div>
<div class="t" style="left:883.02px;top:134.11px;font-size:11.92px;color:#dcdcdc;">P</div>
<div class="a" style="left:899px;top:133px;width:78px;height:13px;background:#0f0f0f;border-right:1px solid #2e2e2e"></div>
<div class="t" style="left:933.36px;top:134.11px;font-size:11.92px;color:#dcdcdc;">Q</div>
<div class="a" style="left:977px;top:133px;width:77px;height:13px;background:#0f0f0f;border-right:1px solid #2e2e2e"></div>
<div class="t" style="left:1011.20px;top:134.11px;font-size:11.92px;color:#dcdcdc;">R</div>
<div class="a" style="left:1054px;top:133px;width:77px;height:13px;background:#0f0f0f;border-right:1px solid #2e2e2e"></div>
<div class="t" style="left:1088.52px;top:134.11px;font-size:11.92px;color:#dcdcdc;">S</div>
<div class="a" style="left:1131px;top:133px;width:77px;height:13px;background:#0f0f0f;border-right:1px solid #2e2e2e"></div>
<div class="t" style="left:1165.86px;top:134.11px;font-size:11.92px;color:#dcdcdc;">T</div>
<div class="a" style="left:1208px;top:133px;width:77px;height:13px;background:#0f0f0f;border-right:1px solid #2e2e2e"></div>
<div class="t" style="left:1242.20px;top:134.11px;font-size:11.92px;color:#dcdcdc;">U</div>
<div class="a" style="left:1285px;top:133px;width:68px;height:13px;background:#0f0f0f;border-right:1px solid #2e2e2e"></div>
<div class="t" style="left:1315.02px;top:134.11px;font-size:11.92px;color:#dcdcdc;">V</div>
<div class="a" style="left:1353px;top:133px;width:17px;height:13px;background:#0f0f0f;border-right:1px solid #2e2e2e"></div>
<div class="t" style="left:1355.87px;top:134.11px;font-size:11.92px;color:#dcdcdc;">W</div>
<div class="a" style="left:25px;top:145px;width:14px;height:1px;background:#21a366"></div>
<div class="a" style="left:5px;top:146px;width:20px;height:22px;background:#5c5c5c;border-bottom:1px solid #2a2a2a"></div>
<div class="t" style="left:11.97px;top:155.56px;font-size:11.63px;color:#dcdcdc;transform:scaleX(0.9200);transform-origin:center;">1</div>
<div class="a" style="left:5px;top:168px;width:20px;height:20px;background:#0f0f0f;border-bottom:1px solid #2a2a2a"></div>
<div class="t" style="left:11.97px;top:175.56px;font-size:11.63px;color:#dcdcdc;transform:scaleX(0.9200);transform-origin:center;">2</div>
<div class="a" style="left:5px;top:188px;width:20px;height:19px;background:#0f0f0f;border-bottom:1px solid #2a2a2a"></div>
<div class="t" style="left:11.97px;top:194.56px;font-size:11.63px;color:#dcdcdc;transform:scaleX(0.9200);transform-origin:center;">3</div>
<div class="a" style="left:5px;top:207px;width:20px;height:13.5px;background:#0f0f0f;border-bottom:1px solid #2a2a2a"></div>
<div class="t" style="left:11.97px;top:208.06px;font-size:11.63px;color:#dcdcdc;transform:scaleX(0.9200);transform-origin:center;">4</div>
<div class="a" style="left:5px;top:220.5px;width:20px;height:20.5px;background:#0f0f0f;border-bottom:1px solid #2a2a2a"></div>
<div class="t" style="left:11.97px;top:228.56px;font-size:11.63px;color:#dcdcdc;transform:scaleX(0.9200);transform-origin:center;">5</div>
<div class="a" style="left:5px;top:241px;width:20px;height:17px;background:#0f0f0f;border-bottom:1px solid #2a2a2a"></div>
<div class="t" style="left:11.97px;top:245.56px;font-size:11.63px;color:#dcdcdc;transform:scaleX(0.9200);transform-origin:center;">6</div>
<div class="a" style="left:5px;top:258px;width:20px;height:14.699999999999989px;background:#0f0f0f;border-bottom:1px solid #2a2a2a"></div>
<div class="t" style="left:11.97px;top:260.26px;font-size:11.63px;color:#dcdcdc;transform:scaleX(0.9200);transform-origin:center;">7</div>
<div class="a" style="left:5px;top:272.7px;width:20px;height:14.300000000000011px;background:#0f0f0f;border-bottom:1px solid #2a2a2a"></div>
<div class="t" style="left:11.97px;top:274.56px;font-size:11.63px;color:#dcdcdc;transform:scaleX(0.9200);transform-origin:center;">9</div>
<div class="a" style="left:5px;top:287px;width:20px;height:14.199999999999989px;background:#0f0f0f;border-bottom:1px solid #2a2a2a"></div>
<div class="t" style="left:8.73px;top:288.76px;font-size:11.63px;color:#dcdcdc;transform:scaleX(0.9200);transform-origin:center;">10</div>
<div class="a" style="left:5px;top:301.2px;width:20px;height:14.5px;background:#0f0f0f;border-bottom:1px solid #2a2a2a"></div>
<div class="t" style="left:9.17px;top:303.26px;font-size:11.63px;color:#dcdcdc;transform:scaleX(0.9200);transform-origin:center;">11</div>
<div class="a" style="left:5px;top:315.7px;width:20px;height:13.900000000000034px;background:#0f0f0f;border-bottom:1px solid #2a2a2a"></div>
<div class="t" style="left:8.73px;top:317.16px;font-size:11.63px;color:#dcdcdc;transform:scaleX(0.9200);transform-origin:center;">12</div>
<div class="a" style="left:5px;top:329.6px;width:20px;height:14.199999999999989px;background:#0f0f0f;border-bottom:1px solid #2a2a2a"></div>
<div class="t" style="left:8.73px;top:331.36px;font-size:11.63px;color:#dcdcdc;transform:scaleX(0.9200);transform-origin:center;">13</div>
<div class="a" style="left:5px;top:343.8px;width:20px;height:13.599999999999966px;background:#0f0f0f;border-bottom:1px solid #2a2a2a"></div>
<div class="t" style="left:8.73px;top:344.96px;font-size:11.63px;color:#dcdcdc;transform:scaleX(0.9200);transform-origin:center;">14</div>
<div class="a" style="left:5px;top:357.4px;width:20px;height:10.800000000000011px;background:#0f0f0f;border-bottom:1px solid #2a2a2a"></div>
<div class="t" style="left:8.73px;top:355.76px;font-size:11.63px;color:#dcdcdc;transform:scaleX(0.9200);transform-origin:center;">15</div>
<div class="a" style="left:5px;top:368.2px;width:20px;height:20.19999999999999px;background:#0f0f0f;border-bottom:1px solid #2a2a2a"></div>
<div class="t" style="left:8.73px;top:375.96px;font-size:11.63px;color:#dcdcdc;transform:scaleX(0.9200);transform-origin:center;">16</div>
<div class="a" style="left:5px;top:388.4px;width:20px;height:13.911999999999978px;background:#0f0f0f;border-bottom:1px solid #2a2a2a"></div>
<div class="t" style="left:8.73px;top:389.87px;font-size:11.63px;color:#dcdcdc;transform:scaleX(0.9200);transform-origin:center;">17</div>
<div class="a" style="left:5px;top:402.31199999999995px;width:20px;height:13.911999999999978px;background:#0f0f0f;border-bottom:1px solid #2a2a2a"></div>
<div class="t" style="left:8.73px;top:403.78px;font-size:11.63px;color:#dcdcdc;transform:scaleX(0.9200);transform-origin:center;">18</div>
<div class="a" style="left:5px;top:416.22399999999993px;width:20px;height:13.911999999999978px;background:#0f0f0f;border-bottom:1px solid #2a2a2a"></div>
<div class="t" style="left:8.73px;top:417.69px;font-size:11.63px;color:#dcdcdc;transform:scaleX(0.9200);transform-origin:center;">19</div>
<div class="a" style="left:5px;top:430.1359999999999px;width:20px;height:13.911999999999978px;background:#0f0f0f;border-bottom:1px solid #2a2a2a"></div>
<div class="t" style="left:8.73px;top:431.60px;font-size:11.63px;color:#dcdcdc;transform:scaleX(0.9200);transform-origin:center;">20</div>
<div class="a" style="left:5px;top:444.0479999999999px;width:20px;height:13.911999999999978px;background:#0f0f0f;border-bottom:1px solid #2a2a2a"></div>
<div class="t" style="left:8.73px;top:445.52px;font-size:11.63px;color:#dcdcdc;transform:scaleX(0.9200);transform-origin:center;">21</div>
<div class="a" style="left:5px;top:457.95999999999987px;width:20px;height:13.911999999999978px;background:#0f0f0f;border-bottom:1px solid #2a2a2a"></div>
<div class="t" style="left:8.73px;top:459.43px;font-size:11.63px;color:#dcdcdc;transform:scaleX(0.9200);transform-origin:center;">22</div>
<div class="a" style="left:5px;top:471.87199999999984px;width:20px;height:13.911999999999978px;background:#0f0f0f;border-bottom:1px solid #2a2a2a"></div>
<div class="t" style="left:8.73px;top:473.34px;font-size:11.63px;color:#dcdcdc;transform:scaleX(0.9200);transform-origin:center;">23</div>
<div class="a" style="left:5px;top:485.7839999999998px;width:20px;height:13.911999999999978px;background:#0f0f0f;border-bottom:1px solid #2a2a2a"></div>
<div class="t" style="left:8.73px;top:487.25px;font-size:11.63px;color:#dcdcdc;transform:scaleX(0.9200);transform-origin:center;">24</div>
<div class="a" style="left:5px;top:499.6959999999998px;width:20px;height:13.912000000000035px;background:#0f0f0f;border-bottom:1px solid #2a2a2a"></div>
<div class="t" style="left:8.73px;top:501.16px;font-size:11.63px;color:#dcdcdc;transform:scaleX(0.9200);transform-origin:center;">25</div>
<div class="a" style="left:5px;top:513.6079999999998px;width:20px;height:13.912000000000035px;background:#0f0f0f;border-bottom:1px solid #2a2a2a"></div>
<div class="t" style="left:8.73px;top:515.08px;font-size:11.63px;color:#dcdcdc;transform:scaleX(0.9200);transform-origin:center;">26</div>
<div class="a" style="left:5px;top:527.5199999999999px;width:20px;height:13.912000000000035px;background:#0f0f0f;border-bottom:1px solid #2a2a2a"></div>
<div class="t" style="left:8.73px;top:528.99px;font-size:11.63px;color:#dcdcdc;transform:scaleX(0.9200);transform-origin:center;">27</div>
<div class="a" style="left:5px;top:541.4319999999999px;width:20px;height:13.912000000000035px;background:#0f0f0f;border-bottom:1px solid #2a2a2a"></div>
<div class="t" style="left:8.73px;top:542.90px;font-size:11.63px;color:#dcdcdc;transform:scaleX(0.9200);transform-origin:center;">28</div>
<div class="a" style="left:5px;top:555.3439999999999px;width:20px;height:13.912000000000035px;background:#0f0f0f;border-bottom:1px solid #2a2a2a"></div>
<div class="t" style="left:8.73px;top:556.81px;font-size:11.63px;color:#dcdcdc;transform:scaleX(0.9200);transform-origin:center;">29</div>
<div class="a" style="left:5px;top:569.256px;width:20px;height:13.912000000000035px;background:#0f0f0f;border-bottom:1px solid #2a2a2a"></div>
<div class="t" style="left:8.73px;top:570.72px;font-size:11.63px;color:#dcdcdc;transform:scaleX(0.9200);transform-origin:center;">30</div>
<div class="a" style="left:5px;top:583.168px;width:20px;height:13.912000000000035px;background:#0f0f0f;border-bottom:1px solid #2a2a2a"></div>
<div class="t" style="left:8.73px;top:584.64px;font-size:11.63px;color:#dcdcdc;transform:scaleX(0.9200);transform-origin:center;">31</div>
<div class="a" style="left:5px;top:597.08px;width:20px;height:13.912000000000035px;background:#0f0f0f;border-bottom:1px solid #2a2a2a"></div>
<div class="t" style="left:8.73px;top:598.55px;font-size:11.63px;color:#dcdcdc;transform:scaleX(0.9200);transform-origin:center;">32</div>
<div class="a" style="left:5px;top:610.9920000000001px;width:20px;height:13.912000000000035px;background:#0f0f0f;border-bottom:1px solid #2a2a2a"></div>
<div class="t" style="left:8.73px;top:612.46px;font-size:11.63px;color:#dcdcdc;transform:scaleX(0.9200);transform-origin:center;">33</div>
<div class="a" style="left:5px;top:624.9040000000001px;width:20px;height:13.912000000000035px;background:#0f0f0f;border-bottom:1px solid #2a2a2a"></div>
<div class="t" style="left:8.73px;top:626.37px;font-size:11.63px;color:#dcdcdc;transform:scaleX(0.9200);transform-origin:center;">34</div>
<div class="a" style="left:5px;top:638.8160000000001px;width:20px;height:13.912000000000035px;background:#0f0f0f;border-bottom:1px solid #2a2a2a"></div>
<div class="t" style="left:8.73px;top:640.28px;font-size:11.63px;color:#dcdcdc;transform:scaleX(0.9200);transform-origin:center;">35</div>
<div class="a" style="left:5px;top:652.7280000000002px;width:20px;height:13.912000000000035px;background:#0f0f0f;border-bottom:1px solid #2a2a2a"></div>
<div class="t" style="left:8.73px;top:654.20px;font-size:11.63px;color:#dcdcdc;transform:scaleX(0.9200);transform-origin:center;">36</div>
<div class="a" style="left:5px;top:666.6400000000002px;width:20px;height:13.912000000000035px;background:#0f0f0f;border-bottom:1px solid #2a2a2a"></div>
<div class="t" style="left:8.73px;top:668.11px;font-size:11.63px;color:#dcdcdc;transform:scaleX(0.9200);transform-origin:center;">37</div>
<div class="a" style="left:5px;top:680.5520000000002px;width:20px;height:13.912000000000035px;background:#0f0f0f;border-bottom:1px solid #2a2a2a"></div>
<div class="t" style="left:8.73px;top:682.02px;font-size:11.63px;color:#dcdcdc;transform:scaleX(0.9200);transform-origin:center;">38</div>
<div class="a" style="left:5px;top:694.4640000000003px;width:20px;height:13.912000000000035px;background:#0f0f0f;border-bottom:1px solid #2a2a2a"></div>
<div class="t" style="left:8.73px;top:695.93px;font-size:11.63px;color:#dcdcdc;transform:scaleX(0.9200);transform-origin:center;">39</div>
<div class="a" style="left:5px;top:708.3760000000003px;width:20px;height:13.912000000000035px;background:#0f0f0f;border-bottom:1px solid #2a2a2a"></div>
<div class="t" style="left:8.73px;top:709.84px;font-size:11.63px;color:#dcdcdc;transform:scaleX(0.9200);transform-origin:center;">40</div>
<div class="a" style="left:5px;top:722.2880000000004px;width:20px;height:13.912000000000035px;background:#0f0f0f;border-bottom:1px solid #2a2a2a"></div>
<div class="t" style="left:8.73px;top:723.76px;font-size:11.63px;color:#dcdcdc;transform:scaleX(0.9200);transform-origin:center;">41</div>
<div class="a" style="left:5px;top:736.2px;width:20px;height:20.299999999999955px;background:#0f0f0f;border-bottom:1px solid #2a2a2a"></div>
<div class="t" style="left:8.73px;top:744.06px;font-size:11.63px;color:#dcdcdc;transform:scaleX(0.9200);transform-origin:center;">42</div>
<div class="a" style="left:5px;top:756.5px;width:20px;height:13.799999999999955px;background:#0f0f0f;border-bottom:1px solid #2a2a2a"></div>
<div class="t" style="left:8.73px;top:757.86px;font-size:11.63px;color:#dcdcdc;transform:scaleX(0.9200);transform-origin:center;">43</div>
<div class="a" style="left:5px;top:770.3px;width:20px;height:13.800000000000068px;background:#0f0f0f;border-bottom:1px solid #2a2a2a"></div>
<div class="t" style="left:8.73px;top:771.66px;font-size:11.63px;color:#dcdcdc;transform:scaleX(0.9200);transform-origin:center;">44</div>
<div class="a" style="left:5px;top:784.1px;width:20px;height:15.899999999999977px;background:#0f0f0f;border-bottom:1px solid #2a2a2a"></div>
<div class="t" style="left:8.73px;top:787.56px;font-size:11.63px;color:#dcdcdc;transform:scaleX(0.9200);transform-origin:center;">45</div>
<div class="a" style="left:24px;top:146px;width:1px;height:22px;background:#21a366"></div>
<div class="a" style="left:5px;top:220.3px;width:20px;height:1.2px;background:#8a8a8a"></div>
<div class="a" style="left:25px;top:220.3px;width:1345px;height:1px;background:#c8c8c8"></div>
<div class="a" style="left:1370px;top:133px;width:14px;height:667px;background:#0f0f0f"></div>
<svg class="a" style="left:1373px;top:135px" width="9" height="7" viewBox="0 0 9 7"><path d="M4.5 1 L8 6 H1 Z" fill="#9a9a9a"/></svg>
<div class="a" style="left:1374.5px;top:145px;width:6px;height:269px;border-radius:3px;background:#9e9e9e"></div>
<svg class="a" style="left:1373px;top:789px" width="9" height="7" viewBox="0 0 9 7"><path d="M4.5 6 L8 1 H1 Z" fill="#9a9a9a"/></svg>
<div class="t" style="left:42.20px;top:148.50px;font-size:18.31px;color:#1c1c1c;font-weight:bold;transform:scaleX(1.0737);transform-origin:left;">Top Revenue</div>
<div class="t" style="left:42.20px;top:169.72px;font-size:16.28px;color:#000;font-weight:bold;transform:scaleX(1.0224);transform-origin:left;">ABC Company Inc.</div>
<div class="t" style="left:41.60px;top:192.89px;font-size:10.17px;color:#2476f2;font-weight:bold;transform:scaleX(1.0730);transform-origin:left;">Go to Table of Contents</div>
<div class="a" style="left:41.6px;top:201.6px;width:122.9px;height:1px;background:#2476f2;"></div>
<div class="a" style="left:39px;top:221px;width:1313px;height:20.3px;background:#4b4ed0;"></div>
<div class="a" style="left:288px;top:240.6px;width:488px;height:0.8px;background:#f4f4fc;"></div>
<div class="t" style="left:450.40px;top:223.29px;font-size:15.84px;color:#fff;font-weight:bold;transform:scaleX(1.1122);transform-origin:left;">Top 5 Revenue Streams ($'000) - 5 years to December 2030</div>
<div class="a" style="left:39px;top:258.2px;width:737px;height:13.2px;background:#6b6be5;"></div>
<div class="a" style="left:287.5px;top:258.2px;width:1px;height:13.2px;background:#c8c8f4;"></div>
<div class="a" style="left:385.5px;top:258.2px;width:1px;height:13.2px;background:#c8c8f4;"></div>
<div class="a" style="left:482.5px;top:258.2px;width:1px;height:13.2px;background:#c8c8f4;"></div>
<div class="a" style="left:580.5px;top:258.2px;width:1px;height:13.2px;background:#c8c8f4;"></div>
<div class="a" style="left:678.5px;top:258.2px;width:1px;height:13.2px;background:#c8c8f4;"></div>
<div class="t" style="left:47.00px;top:259.67px;font-size:10.90px;color:#fff;font-weight:bold;">Year Ending</div>
<div class="t" style="left:325.36px;top:260.44px;font-size:10.47px;color:#fff;font-weight:bold;transform:scaleX(1.1083);transform-origin:center;">2026</div>
<div class="t" style="left:422.86px;top:260.44px;font-size:10.47px;color:#fff;font-weight:bold;transform:scaleX(1.1083);transform-origin:center;">2027</div>
<div class="t" style="left:520.36px;top:260.44px;font-size:10.47px;color:#fff;font-weight:bold;transform:scaleX(1.1083);transform-origin:center;">2028</div>
<div class="t" style="left:618.36px;top:260.44px;font-size:10.47px;color:#fff;font-weight:bold;transform:scaleX(1.1083);transform-origin:center;">2029</div>
<div class="t" style="left:716.36px;top:260.44px;font-size:10.47px;color:#fff;font-weight:bold;transform:scaleX(1.1083);transform-origin:center;">2030</div>
<div class="a" style="left:899.5px;top:258.2px;width:385.5px;height:13.2px;background:#6b6be5;"></div>
<div class="a" style="left:976.5px;top:258.2px;width:1px;height:13.2px;background:#c8c8f4;"></div>
<div class="a" style="left:1053.5px;top:258.2px;width:1px;height:13.2px;background:#c8c8f4;"></div>
<div class="a" style="left:1130.5px;top:258.2px;width:1px;height:13.2px;background:#c8c8f4;"></div>
<div class="a" style="left:1207.5px;top:258.2px;width:1px;height:13.2px;background:#c8c8f4;"></div>
<div class="t" style="left:926.36px;top:260.44px;font-size:10.47px;color:#fff;font-weight:bold;transform:scaleX(1.1083);transform-origin:center;">2026</div>
<div class="t" style="left:1003.86px;top:260.44px;font-size:10.47px;color:#fff;font-weight:bold;transform:scaleX(1.1083);transform-origin:center;">2027</div>
<div class="t" style="left:1080.86px;top:260.44px;font-size:10.47px;color:#fff;font-weight:bold;transform:scaleX(1.1083);transform-origin:center;">2028</div>
<div class="t" style="left:1157.86px;top:260.44px;font-size:10.47px;color:#fff;font-weight:bold;transform:scaleX(1.1083);transform-origin:center;">2029</div>
<div class="t" style="left:1234.86px;top:260.44px;font-size:10.47px;color:#fff;font-weight:bold;transform:scaleX(1.1083);transform-origin:center;">2030</div>
<div class="t w" style="left:41.30px;top:277.12px;font-size:10.61px;color:#111;transform:scaleX(0.9197);transform-origin:left;">Pet Food</div>
<div class="t w" style="left:367.60px;top:277.12px;font-size:10.61px;color:#111;transform:scaleX(0.9630);transform-origin:right;">72</div>
<div class="t w" style="left:458.70px;top:277.12px;font-size:10.61px;color:#111;transform:scaleX(0.9630);transform-origin:right;">298</div>
<div class="t w" style="left:547.85px;top:277.12px;font-size:10.61px;color:#111;transform:scaleX(0.9630);transform-origin:right;">1,130</div>
<div class="t w" style="left:645.85px;top:277.12px;font-size:10.61px;color:#111;transform:scaleX(0.9630);transform-origin:right;">2,933</div>
<div class="t w" style="left:743.85px;top:277.12px;font-size:10.61px;color:#111;transform:scaleX(0.9630);transform-origin:right;">6,916</div>
<div class="t w" style="left:939.12px;top:277.12px;font-size:10.61px;color:#111;font-style:italic;transform:scaleX(1.0200);transform-origin:right;">71.4%</div>
<div class="t w" style="left:1016.12px;top:277.12px;font-size:10.61px;color:#111;font-style:italic;transform:scaleX(1.0200);transform-origin:right;">70.8%</div>
<div class="t w" style="left:1093.12px;top:277.12px;font-size:10.61px;color:#111;font-style:italic;transform:scaleX(1.0200);transform-origin:right;">70.8%</div>
<div class="t w" style="left:1170.12px;top:277.12px;font-size:10.61px;color:#111;font-style:italic;transform:scaleX(1.0200);transform-origin:right;">70.6%</div>
<div class="t w" style="left:1247.12px;top:277.12px;font-size:10.61px;color:#111;font-style:italic;transform:scaleX(1.0200);transform-origin:right;">70.6%</div>
<div class="t w" style="left:41.30px;top:290.92px;font-size:10.61px;color:#111;transform:scaleX(0.9446);transform-origin:left;">Pet Accessories</div>
<div class="t w" style="left:367.60px;top:290.92px;font-size:10.61px;color:#111;transform:scaleX(0.9630);transform-origin:right;">16</div>
<div class="t w" style="left:464.60px;top:290.92px;font-size:10.61px;color:#111;transform:scaleX(0.9630);transform-origin:right;">67</div>
<div class="t w" style="left:556.70px;top:290.92px;font-size:10.61px;color:#111;transform:scaleX(0.9630);transform-origin:right;">254</div>
<div class="t w" style="left:654.70px;top:290.92px;font-size:10.61px;color:#111;transform:scaleX(0.9630);transform-origin:right;">670</div>
<div class="t w" style="left:743.85px;top:290.92px;font-size:10.61px;color:#111;transform:scaleX(0.9630);transform-origin:right;">1,549</div>
<div class="t w" style="left:939.12px;top:290.92px;font-size:10.61px;color:#111;font-style:italic;transform:scaleX(1.0200);transform-origin:right;">15.9%</div>
<div class="t w" style="left:1016.12px;top:290.92px;font-size:10.61px;color:#111;font-style:italic;transform:scaleX(1.0200);transform-origin:right;">16.0%</div>
<div class="t w" style="left:1093.12px;top:290.92px;font-size:10.61px;color:#111;font-style:italic;transform:scaleX(1.0200);transform-origin:right;">15.9%</div>
<div class="t w" style="left:1170.12px;top:290.92px;font-size:10.61px;color:#111;font-style:italic;transform:scaleX(1.0200);transform-origin:right;">16.1%</div>
<div class="t w" style="left:1247.12px;top:290.92px;font-size:10.61px;color:#111;font-style:italic;transform:scaleX(1.0200);transform-origin:right;">15.8%</div>
<div class="t w" style="left:41.30px;top:304.72px;font-size:10.61px;color:#111;transform:scaleX(0.9778);transform-origin:left;">Pet Toys</div>
<div class="t w" style="left:367.60px;top:304.72px;font-size:10.61px;color:#111;transform:scaleX(0.9630);transform-origin:right;">10</div>
<div class="t w" style="left:464.60px;top:304.72px;font-size:10.61px;color:#111;transform:scaleX(0.9630);transform-origin:right;">41</div>
<div class="t w" style="left:556.70px;top:304.72px;font-size:10.61px;color:#111;transform:scaleX(0.9630);transform-origin:right;">160</div>
<div class="t w" style="left:654.70px;top:304.72px;font-size:10.61px;color:#111;transform:scaleX(0.9630);transform-origin:right;">407</div>
<div class="t w" style="left:752.70px;top:304.72px;font-size:10.61px;color:#111;transform:scaleX(0.9630);transform-origin:right;">996</div>
<div class="t w" style="left:945.02px;top:304.72px;font-size:10.61px;color:#111;font-style:italic;transform:scaleX(1.0200);transform-origin:right;">9.5%</div>
<div class="t w" style="left:1022.02px;top:304.72px;font-size:10.61px;color:#111;font-style:italic;transform:scaleX(1.0200);transform-origin:right;">9.8%</div>
<div class="t w" style="left:1093.12px;top:304.72px;font-size:10.61px;color:#111;font-style:italic;transform:scaleX(1.0200);transform-origin:right;">10.0%</div>
<div class="t w" style="left:1176.02px;top:304.72px;font-size:10.61px;color:#111;font-style:italic;transform:scaleX(1.0200);transform-origin:right;">9.8%</div>
<div class="t w" style="left:1247.12px;top:304.72px;font-size:10.61px;color:#111;font-style:italic;transform:scaleX(1.0200);transform-origin:right;">10.2%</div>
<div class="t w" style="left:41.30px;top:318.52px;font-size:10.61px;color:#111;transform:scaleX(0.9761);transform-origin:left;">Pet Treats</div>
<div class="t w" style="left:373.50px;top:318.52px;font-size:10.61px;color:#111;transform:scaleX(0.9630);transform-origin:right;">3</div>
<div class="t w" style="left:464.60px;top:318.52px;font-size:10.61px;color:#111;transform:scaleX(0.9630);transform-origin:right;">14</div>
<div class="t w" style="left:562.60px;top:318.52px;font-size:10.61px;color:#111;transform:scaleX(0.9630);transform-origin:right;">52</div>
<div class="t w" style="left:654.70px;top:318.52px;font-size:10.61px;color:#111;transform:scaleX(0.9630);transform-origin:right;">144</div>
<div class="t w" style="left:752.70px;top:318.52px;font-size:10.61px;color:#111;transform:scaleX(0.9630);transform-origin:right;">332</div>
<div class="t w" style="left:945.02px;top:318.52px;font-size:10.61px;color:#111;font-style:italic;transform:scaleX(1.0200);transform-origin:right;">3.2%</div>
<div class="t w" style="left:1022.02px;top:318.52px;font-size:10.61px;color:#111;font-style:italic;transform:scaleX(1.0200);transform-origin:right;">3.4%</div>
<div class="t w" style="left:1099.02px;top:318.52px;font-size:10.61px;color:#111;font-style:italic;transform:scaleX(1.0200);transform-origin:right;">3.2%</div>
<div class="t w" style="left:1176.02px;top:318.52px;font-size:10.61px;color:#111;font-style:italic;transform:scaleX(1.0200);transform-origin:right;">3.5%</div>
<div class="t w" style="left:1253.02px;top:318.52px;font-size:10.61px;color:#111;font-style:italic;transform:scaleX(1.0200);transform-origin:right;">3.4%</div>
<div class="t w" style="left:41.30px;top:332.32px;font-size:10.61px;color:#111;transform:scaleX(0.9673);transform-origin:left;">Other Revenue</div>
<div class="a" style="left:364.5px;top:337.7px;width:3.2px;height:1px;background:#222;"></div>
<div class="a" style="left:461.5px;top:337.7px;width:3.2px;height:1px;background:#222;"></div>
<div class="a" style="left:559.5px;top:337.7px;width:3.2px;height:1px;background:#222;"></div>
<div class="a" style="left:657.5px;top:337.7px;width:3.2px;height:1px;background:#222;"></div>
<div class="a" style="left:755.5px;top:337.7px;width:3.2px;height:1px;background:#222;"></div>
<div class="a" style="left:966px;top:337.7px;width:3px;height:1px;background:#222;"></div>
<div class="a" style="left:1043px;top:337.7px;width:3px;height:1px;background:#222;"></div>
<div class="a" style="left:1120px;top:337.7px;width:3px;height:1px;background:#222;"></div>
<div class="a" style="left:1197px;top:337.7px;width:3px;height:1px;background:#222;"></div>
<div class="a" style="left:1274px;top:337.7px;width:3px;height:1px;background:#222;"></div>
<div class="a" style="left:39px;top:344px;width:737px;height:13.9px;background:#4ab1e6;"></div>
<div class="a" style="left:899.5px;top:344px;width:385.5px;height:13.9px;background:#4ab1e6;"></div>
<div class="t" style="left:47.80px;top:344.87px;font-size:12.79px;color:#fff;font-weight:bold;transform:scaleX(0.9749);transform-origin:left;">Total Revenue</div>
<div class="t" style="left:360.74px;top:346.34px;font-size:10.47px;color:#fff;font-weight:bold;transform:scaleX(1.1000);transform-origin:right;">100</div>
<div class="t" style="left:457.74px;top:346.34px;font-size:10.47px;color:#fff;font-weight:bold;transform:scaleX(1.1000);transform-origin:right;">421</div>
<div class="t" style="left:547.01px;top:346.34px;font-size:10.47px;color:#fff;font-weight:bold;transform:scaleX(1.1000);transform-origin:right;">1,596</div>
<div class="t" style="left:645.01px;top:346.34px;font-size:10.47px;color:#fff;font-weight:bold;transform:scaleX(1.1000);transform-origin:right;">4,154</div>
<div class="t" style="left:743.01px;top:346.34px;font-size:10.47px;color:#fff;font-weight:bold;transform:scaleX(1.1000);transform-origin:right;">9,794</div>
<div class="t" style="left:945.66px;top:346.22px;font-size:10.61px;color:#fff;font-weight:bold;font-style:italic;transform:scaleX(1.1903);transform-origin:right;">100%</div>
<div class="t" style="left:1022.66px;top:346.22px;font-size:10.61px;color:#fff;font-weight:bold;font-style:italic;transform:scaleX(1.1903);transform-origin:right;">100%</div>
<div class="t" style="left:1099.66px;top:346.22px;font-size:10.61px;color:#fff;font-weight:bold;font-style:italic;transform:scaleX(1.1903);transform-origin:right;">100%</div>
<div class="t" style="left:1176.66px;top:346.22px;font-size:10.61px;color:#fff;font-weight:bold;font-style:italic;transform:scaleX(1.1903);transform-origin:right;">100%</div>
<div class="t" style="left:1253.66px;top:346.22px;font-size:10.61px;color:#fff;font-weight:bold;font-style:italic;transform:scaleX(1.1903);transform-origin:right;">100%</div>
<div class="a" style="left:39px;top:368.2px;width:1313px;height:20px;background:#4b4ed0;"></div>
<div class="t" style="left:450.40px;top:371.19px;font-size:15.84px;color:#fff;font-weight:bold;transform:scaleX(1.1122);transform-origin:left;">Top 5 Revenue Streams ($'000) - 5 years to December 2030</div>
<div class="a" style="left:39px;top:736.3px;width:1313px;height:19.9px;background:#4b4ed0;"></div>
<div class="a" style="left:873.5px;top:736.3px;width:1px;height:19.9px;background:#7c7ee0;"></div>
<div class="t" style="left:332.10px;top:738.67px;font-size:15.99px;color:#fff;font-weight:bold;transform:scaleX(1.1305);transform-origin:left;">Revenue Depth ($'000) - 2026</div>
<div class="t" style="left:976.20px;top:739.27px;font-size:15.99px;color:#fff;font-weight:bold;transform:scaleX(1.1361);transform-origin:left;">Monthly Run-Rate ($'000) - 2026</div>
<div class="a" style="left:1207.5px;top:756.5px;width:144.8px;height:13.3px;background:#fff06e;box-shadow:inset 0 0 0 0.6px #d8d8c8"></div>
<div class="t" style="left:1268.36px;top:758.14px;font-size:10.47px;color:#000;font-weight:bold;transform:scaleX(1.1169);transform-origin:center;">2026</div>
<div class="a" style="left:39px;top:775.8px;width:710px;height:1.2px;background:#a8dbf3;"></div>
<div class="t" style="left:124.20px;top:790.25px;font-size:11.05px;color:#000;font-weight:bold;transform:scaleX(1.0559);transform-origin:left;">71.7</div>
<div class="a" style="left:783px;top:793.5px;width:5px;height:5px;background:#4ab1e6;"></div>
<div class="t" style="left:790.70px;top:790.90px;font-size:11.34px;color:#000;font-weight:bold;transform:scaleX(0.9693);transform-origin:left;">Pet Food</div>
<div class="a" style="left:1063.5px;top:790px;width:39px;height:12px;background:#fff;border:1px solid #333"></div>
<div class="t" style="left:1069.75px;top:791.66px;font-size:11.63px;color:#000;font-weight:bold;transform:scaleX(1.0942);transform-origin:center;">3.2%</div>
<div class="a" style="left:1102.4px;top:797px;width:5px;height:4px;background:#fff;border:1px solid #888"></div>
<div class="a" style="left:1120.8px;top:793.4px;width:39px;height:10px;background:#fff;border:1px solid #333"></div>
<div class="t" style="left:1126.75px;top:796.16px;font-size:11.63px;color:#000;font-weight:bold;transform:scaleX(1.0942);transform-origin:center;">0.0%</div>
<svg class="a" style="left:0;top:0" width="1390" height="844" viewBox="0 0 1390 844">
<rect x="84" y="713.80" width="692" height="1.2" fill="#a9c3ee"/>
<rect x="84" y="683.23" width="692" height="1.2" fill="#a9c3ee"/>
<rect x="84" y="652.66" width="692" height="1.2" fill="#a9c3ee"/>
<rect x="84" y="622.09" width="692" height="1.2" fill="#a9c3ee"/>
<rect x="84" y="591.52" width="692" height="1.2" fill="#a9c3ee"/>
<rect x="84" y="560.95" width="692" height="1.2" fill="#a9c3ee"/>
<rect x="84" y="530.38" width="692" height="1.2" fill="#a9c3ee"/>
<rect x="84" y="499.81" width="692" height="1.2" fill="#a9c3ee"/>
<rect x="84" y="469.24" width="692" height="1.2" fill="#a9c3ee"/>
<rect x="84" y="438.67" width="692" height="1.2" fill="#a9c3ee"/>
<rect x="84" y="408.10" width="692" height="1.2" fill="#a9c3ee"/>
<rect x="107.60" y="496.13" width="92.2" height="218.27" fill="#4ab1e6"/>
<rect x="107.60" y="447.52" width="92.2" height="48.61" fill="#4b4ed0"/>
<rect x="107.60" y="418.48" width="92.2" height="29.04" fill="#f07a6f"/>
<rect x="107.60" y="408.70" width="92.2" height="9.78" fill="#f5b400"/>
<rect x="246.00" y="497.96" width="92.2" height="216.44" fill="#4ab1e6"/>
<rect x="246.00" y="449.05" width="92.2" height="48.91" fill="#4b4ed0"/>
<rect x="246.00" y="419.09" width="92.2" height="29.96" fill="#f07a6f"/>
<rect x="246.00" y="408.70" width="92.2" height="10.39" fill="#f5b400"/>
<rect x="384.40" y="497.96" width="92.2" height="216.44" fill="#4ab1e6"/>
<rect x="384.40" y="449.36" width="92.2" height="48.61" fill="#4b4ed0"/>
<rect x="384.40" y="418.79" width="92.2" height="30.57" fill="#f07a6f"/>
<rect x="384.40" y="408.70" width="92.2" height="10.09" fill="#f5b400"/>
<rect x="522.80" y="498.58" width="92.2" height="215.82" fill="#4ab1e6"/>
<rect x="522.80" y="449.36" width="92.2" height="49.22" fill="#4b4ed0"/>
<rect x="522.80" y="419.40" width="92.2" height="29.96" fill="#f07a6f"/>
<rect x="522.80" y="408.70" width="92.2" height="10.70" fill="#f5b400"/>
<rect x="661.20" y="498.58" width="92.2" height="215.82" fill="#4ab1e6"/>
<rect x="661.20" y="450.28" width="92.2" height="48.30" fill="#4b4ed0"/>
<rect x="661.20" y="419.09" width="92.2" height="31.18" fill="#f07a6f"/>
<rect x="661.20" y="408.70" width="92.2" height="10.39" fill="#f5b400"/>
<rect x="794.6" y="431.80" width="27" height="2" fill="#4ab1e6"/>
<circle cx="807.8" cy="432.8" r="2.3" fill="#4ab1e6"/>
<rect x="794.6" y="495.00" width="27" height="2" fill="#4b4ed0"/>
<rect x="805.2" y="493.40" width="5.2" height="5.2" fill="#4b4ed0"/>
<rect x="794.6" y="558.20" width="27" height="2" fill="#f07a6f"/>
<path d="M807.8 556.20 L810.8 561.20 L804.8 561.20 Z" fill="#f07a6f"/>
<rect x="794.6" y="621.40" width="27" height="2" fill="#f5b400"/>
<path d="M804.8 622.40 H810.8 M806.5 619.90 V624.90 M809.1 619.90 V624.90" stroke="#f5b400" stroke-width="1"/>
<rect x="794.6" y="684.60" width="27" height="2" fill="#22b4b4"/>
<rect x="805.2" y="683.00" width="5.2" height="5.2" fill="#3bb07a"/>
<rect x="983" y="712.30" width="369" height="1.2" fill="#a8dbf3"/>
<rect x="983" y="674.26" width="369" height="1.2" fill="#a8dbf3"/>
<rect x="983" y="636.23" width="369" height="1.2" fill="#a8dbf3"/>
<rect x="983" y="598.19" width="369" height="1.2" fill="#a8dbf3"/>
<rect x="983" y="560.15" width="369" height="1.2" fill="#a8dbf3"/>
<rect x="983" y="522.11" width="369" height="1.2" fill="#a8dbf3"/>
<rect x="983" y="484.07" width="369" height="1.2" fill="#a8dbf3"/>
<rect x="983" y="446.04" width="369" height="1.2" fill="#a8dbf3"/>
<rect x="983" y="408.00" width="369" height="1.2" fill="#a8dbf3"/>
<polyline points="1019.60,710.16 1093.40,701.56 1167.20,669.92 1241.00,601.34 1314.80,449.83" fill="none" stroke="#4ab1e6" stroke-width="2.2" stroke-linejoin="round"/>
<circle cx="1019.60" cy="710.16" r="3.2" fill="#4ab1e6"/>
<circle cx="1093.40" cy="701.56" r="3.2" fill="#4ab1e6"/>
<circle cx="1167.20" cy="669.92" r="3.2" fill="#4ab1e6"/>
<circle cx="1241.00" cy="601.34" r="3.2" fill="#4ab1e6"/>
<circle cx="1314.80" cy="449.83" r="3.2" fill="#4ab1e6"/>
<polyline points="1019.60,712.29 1093.40,710.35 1167.20,703.24 1241.00,687.41 1314.80,653.98" fill="none" stroke="#4b4ed0" stroke-width="2.2" stroke-linejoin="round"/>
<rect x="1015.60" y="708.29" width="8" height="8" fill="#4b4ed0"/>
<rect x="1089.40" y="706.35" width="8" height="8" fill="#4b4ed0"/>
<rect x="1163.20" y="699.24" width="8" height="8" fill="#4b4ed0"/>
<rect x="1237.00" y="683.41" width="8" height="8" fill="#4b4ed0"/>
<rect x="1310.80" y="649.98" width="8" height="8" fill="#4b4ed0"/>
<polyline points="1019.60,712.52 1093.40,711.34 1167.20,706.81 1241.00,697.42 1314.80,675.01" fill="none" stroke="#f07a6f" stroke-width="2.2" stroke-linejoin="round"/>
<path d="M1019.60 708.02 L1024.10 716.02 L1015.10 716.02 Z" fill="#f07a6f"/>
<path d="M1093.40 706.84 L1097.90 714.84 L1088.90 714.84 Z" fill="#f07a6f"/>
<path d="M1167.20 702.31 L1171.70 710.31 L1162.70 710.31 Z" fill="#f07a6f"/>
<path d="M1241.00 692.92 L1245.50 700.92 L1236.50 700.92 Z" fill="#f07a6f"/>
<path d="M1314.80 670.51 L1319.30 678.51 L1310.30 678.51 Z" fill="#f07a6f"/>
<polyline points="1019.60,712.79 1093.40,712.37 1167.20,710.92 1241.00,707.42 1314.80,700.27" fill="none" stroke="#f5b400" stroke-width="2.2" stroke-linejoin="round"/>
<rect x="1015.60" y="708.79" width="8" height="8" fill="#f5b400"/>
<rect x="1089.40" y="708.37" width="8" height="8" fill="#f5b400"/>
<rect x="1163.20" y="706.92" width="8" height="8" fill="#f5b400"/>
<rect x="1237.00" y="703.42" width="8" height="8" fill="#f5b400"/>
<rect x="1310.80" y="696.27" width="8" height="8" fill="#f5b400"/>
<polyline points="1019.60,712.90 1093.40,712.90 1167.20,712.90 1241.00,712.90 1314.80,712.90" fill="none" stroke="#28b4a4" stroke-width="2.2" stroke-linejoin="round"/>
<rect x="1015.60" y="708.90" width="8" height="8" fill="#28b4a4"/>
<rect x="1089.40" y="708.90" width="8" height="8" fill="#28b4a4"/>
<rect x="1163.20" y="708.90" width="8" height="8" fill="#28b4a4"/>
<rect x="1237.00" y="708.90" width="8" height="8" fill="#28b4a4"/>
<rect x="1310.80" y="708.90" width="8" height="8" fill="#28b4a4"/>
</svg>
<div class="a" style="left:141.92px;top:596.57px;width:24.16px;height:17.40px;background:#dde9f3"></div>
<div class="t" style="left:148.02px;top:600.06px;font-size:10.76px;color:#000;font-weight:bold;transform:scaleX(1.1000);transform-origin:center;">72</div>
<div class="a" style="left:140.92px;top:463.53px;width:26.16px;height:16.60px;background:#b3b4ef"></div>
<div class="t" style="left:148.02px;top:466.62px;font-size:10.76px;color:#000;font-weight:bold;transform:scaleX(1.1000);transform-origin:center;">16</div>
<div class="a" style="left:140.92px;top:424.70px;width:26.16px;height:16.60px;background:#f7cdb9"></div>
<div class="t" style="left:148.02px;top:427.80px;font-size:10.76px;color:#000;font-weight:bold;transform:scaleX(1.1000);transform-origin:center;">10</div>
<div class="a" style="left:144.21px;top:405.40px;width:19.58px;height:17.20px;background:#fdf1cf"></div>
<div class="t" style="left:151.01px;top:408.80px;font-size:10.76px;color:#000;font-weight:bold;transform:scaleX(1.1000);transform-origin:center;">3</div>
<div class="a" style="left:146.55px;top:400.35px;width:14.90px;height:16.30px;background:#e0eedc"></div>
<div class="t" style="left:151.01px;top:403.30px;font-size:10.76px;color:#000;font-weight:bold;transform:scaleX(1.1000);transform-origin:center;">0</div>
<div class="t" style="left:141.09px;top:722.60px;font-size:11.34px;color:#000;font-weight:bold;transform:scaleX(1.0707);transform-origin:center;">2026</div>
<div class="a" style="left:277.03px;top:597.48px;width:30.74px;height:17.40px;background:#dde9f3"></div>
<div class="t" style="left:283.43px;top:600.98px;font-size:10.76px;color:#000;font-weight:bold;transform:scaleX(1.1000);transform-origin:center;">298</div>
<div class="a" style="left:279.32px;top:465.21px;width:26.16px;height:16.60px;background:#b3b4ef"></div>
<div class="t" style="left:286.42px;top:468.30px;font-size:10.76px;color:#000;font-weight:bold;transform:scaleX(1.1000);transform-origin:center;">67</div>
<div class="a" style="left:279.32px;top:425.77px;width:26.16px;height:16.60px;background:#f7cdb9"></div>
<div class="t" style="left:286.42px;top:428.87px;font-size:10.76px;color:#000;font-weight:bold;transform:scaleX(1.1000);transform-origin:center;">41</div>
<div class="a" style="left:279.32px;top:405.40px;width:26.16px;height:17.20px;background:#fdf1cf"></div>
<div class="t" style="left:286.42px;top:408.80px;font-size:10.76px;color:#000;font-weight:bold;transform:scaleX(1.1000);transform-origin:center;">14</div>
<div class="a" style="left:284.95px;top:400.35px;width:14.90px;height:16.30px;background:#e0eedc"></div>
<div class="t" style="left:289.41px;top:403.30px;font-size:10.76px;color:#000;font-weight:bold;transform:scaleX(1.1000);transform-origin:center;">0</div>
<div class="t" style="left:279.49px;top:722.60px;font-size:11.34px;color:#000;font-weight:bold;transform:scaleX(1.0707);transform-origin:center;">2027</div>
<div class="a" style="left:410.50px;top:597.48px;width:40.60px;height:17.40px;background:#dde9f3"></div>
<div class="t" style="left:417.34px;top:600.98px;font-size:10.76px;color:#000;font-weight:bold;transform:scaleX(1.1000);transform-origin:center;">1,130</div>
<div class="a" style="left:414.43px;top:465.36px;width:32.74px;height:16.60px;background:#b3b4ef"></div>
<div class="t" style="left:421.83px;top:468.46px;font-size:10.76px;color:#000;font-weight:bold;transform:scaleX(1.1000);transform-origin:center;">254</div>
<div class="a" style="left:414.43px;top:425.77px;width:32.74px;height:16.60px;background:#f7cdb9"></div>
<div class="t" style="left:421.83px;top:428.87px;font-size:10.76px;color:#000;font-weight:bold;transform:scaleX(1.1000);transform-origin:center;">160</div>
<div class="a" style="left:417.72px;top:405.40px;width:26.16px;height:17.20px;background:#fdf1cf"></div>
<div class="t" style="left:424.82px;top:408.80px;font-size:10.76px;color:#000;font-weight:bold;transform:scaleX(1.1000);transform-origin:center;">52</div>
<div class="a" style="left:423.35px;top:400.35px;width:14.90px;height:16.30px;background:#e0eedc"></div>
<div class="t" style="left:427.81px;top:403.30px;font-size:10.76px;color:#000;font-weight:bold;transform:scaleX(1.1000);transform-origin:center;">0</div>
<div class="t" style="left:417.89px;top:722.60px;font-size:11.34px;color:#000;font-weight:bold;transform:scaleX(1.0707);transform-origin:center;">2028</div>
<div class="a" style="left:548.90px;top:597.79px;width:40.60px;height:17.40px;background:#dde9f3"></div>
<div class="t" style="left:555.74px;top:601.28px;font-size:10.76px;color:#000;font-weight:bold;transform:scaleX(1.1000);transform-origin:center;">2,933</div>
<div class="a" style="left:552.83px;top:465.67px;width:32.74px;height:16.60px;background:#b3b4ef"></div>
<div class="t" style="left:560.23px;top:468.76px;font-size:10.76px;color:#000;font-weight:bold;transform:scaleX(1.1000);transform-origin:center;">670</div>
<div class="a" style="left:552.83px;top:426.08px;width:32.74px;height:16.60px;background:#f7cdb9"></div>
<div class="t" style="left:560.23px;top:429.17px;font-size:10.76px;color:#000;font-weight:bold;transform:scaleX(1.1000);transform-origin:center;">407</div>
<div class="a" style="left:552.83px;top:405.40px;width:32.74px;height:17.20px;background:#fdf1cf"></div>
<div class="t" style="left:560.23px;top:408.80px;font-size:10.76px;color:#000;font-weight:bold;transform:scaleX(1.1000);transform-origin:center;">144</div>
<div class="a" style="left:561.75px;top:400.35px;width:14.90px;height:16.30px;background:#e0eedc"></div>
<div class="t" style="left:566.21px;top:403.30px;font-size:10.76px;color:#000;font-weight:bold;transform:scaleX(1.1000);transform-origin:center;">0</div>
<div class="t" style="left:556.29px;top:722.60px;font-size:11.34px;color:#000;font-weight:bold;transform:scaleX(1.0707);transform-origin:center;">2029</div>
<div class="a" style="left:687.30px;top:597.79px;width:40.60px;height:17.40px;background:#dde9f3"></div>
<div class="t" style="left:694.14px;top:601.28px;font-size:10.76px;color:#000;font-weight:bold;transform:scaleX(1.1000);transform-origin:center;">6,916</div>
<div class="a" style="left:686.30px;top:466.13px;width:42.60px;height:16.60px;background:#b3b4ef"></div>
<div class="t" style="left:694.14px;top:469.22px;font-size:10.76px;color:#000;font-weight:bold;transform:scaleX(1.1000);transform-origin:center;">1,549</div>
<div class="a" style="left:691.23px;top:426.38px;width:32.74px;height:16.60px;background:#f7cdb9"></div>
<div class="t" style="left:698.63px;top:429.48px;font-size:10.76px;color:#000;font-weight:bold;transform:scaleX(1.1000);transform-origin:center;">996</div>
<div class="a" style="left:691.23px;top:405.40px;width:32.74px;height:17.20px;background:#fdf1cf"></div>
<div class="t" style="left:698.63px;top:408.80px;font-size:10.76px;color:#000;font-weight:bold;transform:scaleX(1.1000);transform-origin:center;">332</div>
<div class="a" style="left:700.15px;top:400.35px;width:14.90px;height:16.30px;background:#e0eedc"></div>
<div class="t" style="left:704.61px;top:403.30px;font-size:10.76px;color:#000;font-weight:bold;transform:scaleX(1.1000);transform-origin:center;">0</div>
<div class="t" style="left:694.69px;top:722.60px;font-size:11.34px;color:#000;font-weight:bold;transform:scaleX(1.0707);transform-origin:center;">2030</div>
<div class="t" style="left:58.15px;top:710.20px;font-size:10.76px;color:#000;font-weight:bold;transform:scaleX(1.1901);transform-origin:right;">0%</div>
<div class="t" style="left:52.17px;top:679.63px;font-size:10.76px;color:#000;font-weight:bold;transform:scaleX(1.2124);transform-origin:right;">10%</div>
<div class="t" style="left:52.17px;top:649.06px;font-size:10.76px;color:#000;font-weight:bold;transform:scaleX(1.2124);transform-origin:right;">20%</div>
<div class="t" style="left:52.17px;top:618.49px;font-size:10.76px;color:#000;font-weight:bold;transform:scaleX(1.2124);transform-origin:right;">30%</div>
<div class="t" style="left:52.17px;top:587.92px;font-size:10.76px;color:#000;font-weight:bold;transform:scaleX(1.2124);transform-origin:right;">40%</div>
<div class="t" style="left:52.17px;top:557.35px;font-size:10.76px;color:#000;font-weight:bold;transform:scaleX(1.2124);transform-origin:right;">50%</div>
<div class="t" style="left:52.17px;top:526.78px;font-size:10.76px;color:#000;font-weight:bold;transform:scaleX(1.2124);transform-origin:right;">60%</div>
<div class="t" style="left:52.17px;top:496.21px;font-size:10.76px;color:#000;font-weight:bold;transform:scaleX(1.2124);transform-origin:right;">70%</div>
<div class="t" style="left:52.17px;top:465.64px;font-size:10.76px;color:#000;font-weight:bold;transform:scaleX(1.2124);transform-origin:right;">80%</div>
<div class="t" style="left:52.17px;top:435.07px;font-size:10.76px;color:#000;font-weight:bold;transform:scaleX(1.2124);transform-origin:right;">90%</div>
<div class="t" style="left:46.19px;top:404.50px;font-size:10.76px;color:#000;font-weight:bold;transform:scaleX(1.1815);transform-origin:right;">100%</div>
<div class="t" style="left:824.20px;top:427.77px;font-size:10.90px;color:#000;font-weight:bold;transform:scaleX(0.9930);transform-origin:left;">Pet Food</div>
<div class="t" style="left:824.20px;top:490.97px;font-size:10.90px;color:#000;font-weight:bold;transform:scaleX(0.9890);transform-origin:left;">Pet Accessories</div>
<div class="t" style="left:824.20px;top:554.17px;font-size:10.90px;color:#000;font-weight:bold;transform:scaleX(1.0500);transform-origin:left;">Pet Toys</div>
<div class="t" style="left:824.20px;top:617.37px;font-size:10.90px;color:#000;font-weight:bold;transform:scaleX(1.0500);transform-origin:left;">Pet Treats</div>
<div class="t" style="left:824.20px;top:680.57px;font-size:10.90px;color:#000;font-weight:bold;transform:scaleX(1.0500);transform-origin:left;">Other Revenue</div>
<div class="a" style="left:965px;top:713.10px;width:4px;height:1.3px;background:#000"></div>
<div class="t" style="left:942.55px;top:670.48px;font-size:10.61px;color:#000;font-weight:bold;transform:scaleX(1.1111);transform-origin:right;">1,000</div>
<div class="t" style="left:942.55px;top:632.44px;font-size:10.61px;color:#000;font-weight:bold;transform:scaleX(1.1111);transform-origin:right;">2,000</div>
<div class="t" style="left:942.55px;top:594.41px;font-size:10.61px;color:#000;font-weight:bold;transform:scaleX(1.1111);transform-origin:right;">3,000</div>
<div class="t" style="left:942.55px;top:556.37px;font-size:10.61px;color:#000;font-weight:bold;transform:scaleX(1.1111);transform-origin:right;">4,000</div>
<div class="t" style="left:942.55px;top:518.33px;font-size:10.61px;color:#000;font-weight:bold;transform:scaleX(1.1111);transform-origin:right;">5,000</div>
<div class="t" style="left:942.55px;top:480.29px;font-size:10.61px;color:#000;font-weight:bold;transform:scaleX(1.1111);transform-origin:right;">6,000</div>
<div class="t" style="left:942.55px;top:442.26px;font-size:10.61px;color:#000;font-weight:bold;transform:scaleX(1.1111);transform-origin:right;">7,000</div>
<div class="t" style="left:942.55px;top:404.22px;font-size:10.61px;color:#000;font-weight:bold;transform:scaleX(1.1111);transform-origin:right;">8,000</div>
<div class="t" style="left:1007.81px;top:721.95px;font-size:11.05px;color:#000;font-weight:bold;transform:scaleX(1.0988);transform-origin:center;">2026</div>
<div class="t" style="left:1081.61px;top:721.95px;font-size:11.05px;color:#000;font-weight:bold;transform:scaleX(1.0988);transform-origin:center;">2027</div>
<div class="t" style="left:1155.41px;top:721.95px;font-size:11.05px;color:#000;font-weight:bold;transform:scaleX(1.0988);transform-origin:center;">2028</div>
<div class="t" style="left:1229.21px;top:721.95px;font-size:11.05px;color:#000;font-weight:bold;transform:scaleX(1.0988);transform-origin:center;">2029</div>
<div class="t" style="left:1303.01px;top:721.95px;font-size:11.05px;color:#000;font-weight:bold;transform:scaleX(1.0988);transform-origin:center;">2030</div>
<div class="a" style="left:890px;top:799px;width:90px;height:8px;background:#fff"></div>
<div class="a" style="left:5px;top:800px;width:893.7px;height:22.6px;background:#0d0d0d;border-top-right-radius:5px"></div>
<div class="a" style="left:971.4px;top:800px;width:412.6px;height:22.6px;background:#0d0d0d;border-top-left-radius:5px"></div>
<div class="a" style="left:890px;top:806px;width:90px;height:16.6px;background:#0d0d0d"></div>
<div class="a" style="left:898.7px;top:800px;width:72.7px;height:19.7px;background:linear-gradient(#fdfeff,#d5ebf8);border-radius:0 0 4px 4px"></div>
<div class="a" style="left:84.7px;top:803px;width:42.8px;height:17.2px;background:#f7e76b;border-radius:3.5px;box-shadow:inset 0 0 0 0.7px rgba(0,0,0,0.25)"></div>
<div class="t" style="left:90.11px;top:807.14px;font-size:10.47px;color:#262626;transform:scaleX(0.9467);transform-origin:center;">Payroll</div>
<div class="a" style="left:133.8px;top:803px;width:41.2px;height:17.2px;background:#f7e76b;border-radius:3.5px;box-shadow:inset 0 0 0 0.7px rgba(0,0,0,0.25)"></div>
<div class="t" style="left:136.66px;top:807.14px;font-size:10.47px;color:#262626;transform:scaleX(0.9467);transform-origin:center;">CAPEX</div>
<div class="a" style="left:181.6px;top:803px;width:54.0px;height:17.2px;background:#f7e76b;border-radius:3.5px;box-shadow:inset 0 0 0 0.7px rgba(0,0,0,0.25)"></div>
<div class="t" style="left:186.49px;top:807.14px;font-size:10.47px;color:#262626;transform:scaleX(0.9467);transform-origin:center;">CapTable</div>
<div class="a" style="left:242.2px;top:803px;width:42.8px;height:17.2px;background:#f7e76b;border-radius:3.5px;box-shadow:inset 0 0 0 0.7px rgba(0,0,0,0.25)"></div>
<div class="t" style="left:247.31px;top:807.14px;font-size:10.47px;color:#262626;transform:scaleX(0.9467);transform-origin:center;">Capital</div>
<div class="a" style="left:291.5px;top:803px;width:19.5px;height:17.2px;background:#4ab3e8;border-radius:3.5px;box-shadow:inset 0 0 0 0.7px rgba(0,0,0,0.25)"></div>
<div class="t" style="left:296.31px;top:807.14px;font-size:10.47px;color:#262626;transform:scaleX(0.9467);transform-origin:center;">IS</div>
<div class="a" style="left:317.8px;top:803px;width:22.6px;height:17.2px;background:#4ab3e8;border-radius:3.5px;box-shadow:inset 0 0 0 0.7px rgba(0,0,0,0.25)"></div>
<div class="t" style="left:322.13px;top:807.14px;font-size:10.47px;color:#262626;transform:scaleX(0.9467);transform-origin:center;">CF</div>
<div class="a" style="left:347px;top:803px;width:22.7px;height:17.2px;background:#4ab3e8;border-radius:3.5px;box-shadow:inset 0 0 0 0.7px rgba(0,0,0,0.25)"></div>
<div class="t" style="left:351.37px;top:807.14px;font-size:10.47px;color:#262626;transform:scaleX(0.9467);transform-origin:center;">BS</div>
<div class="a" style="left:376px;top:803px;width:54.5px;height:17.2px;background:#4ab3e8;border-radius:3.5px;box-shadow:inset 0 0 0 0.7px rgba(0,0,0,0.25)"></div>
<div class="t" style="left:379.98px;top:807.14px;font-size:10.47px;color:#262626;transform:scaleX(0.9467);transform-origin:center;">Scenarios</div>
<div class="a" style="left:437px;top:803px;width:55.4px;height:17.2px;background:#4ab3e8;border-radius:3.5px;box-shadow:inset 0 0 0 0.7px rgba(0,0,0,0.25)"></div>
<div class="t" style="left:443.27px;top:807.14px;font-size:10.47px;color:#262626;transform:scaleX(0.9467);transform-origin:center;">Valuation</div>
<div class="a" style="left:498.7px;top:803px;width:54.1px;height:17.2px;background:#4ab3e8;border-radius:3.5px;box-shadow:inset 0 0 0 0.7px rgba(0,0,0,0.25)"></div>
<div class="t" style="left:503.36px;top:807.14px;font-size:10.47px;color:#262626;transform:scaleX(0.9467);transform-origin:center;">Summary</div>
<div class="a" style="left:559.5px;top:803px;width:22.5px;height:17.2px;background:#4ab3e8;border-radius:3.5px;box-shadow:inset 0 0 0 0.7px rgba(0,0,0,0.25)"></div>
<div class="t" style="left:563.77px;top:807.14px;font-size:10.47px;color:#262626;transform:scaleX(0.9467);transform-origin:center;">BE</div>
<div class="a" style="left:588.8px;top:803px;width:34.2px;height:17.2px;background:#4ab3e8;border-radius:3.5px;box-shadow:inset 0 0 0 0.7px rgba(0,0,0,0.25)"></div>
<div class="t" style="left:592.82px;top:807.14px;font-size:10.47px;color:#262626;transform:scaleX(0.9467);transform-origin:center;">ROIC</div>
<div class="a" style="left:629.5px;top:803px;width:40.2px;height:17.2px;background:#4ab3e8;border-radius:3.5px;box-shadow:inset 0 0 0 0.7px rgba(0,0,0,0.25)"></div>
<div class="t" style="left:634.19px;top:807.14px;font-size:10.47px;color:#262626;transform:scaleX(0.9467);transform-origin:center;">Charts</div>
<div class="a" style="left:675.8px;top:803px;width:31.1px;height:17.2px;background:#4ab3e8;border-radius:3.5px;box-shadow:inset 0 0 0 0.7px rgba(0,0,0,0.25)"></div>
<div class="t" style="left:680.30px;top:807.14px;font-size:10.47px;color:#262626;transform:scaleX(0.9467);transform-origin:center;">KPIs</div>
<div class="a" style="left:713.2px;top:803px;width:80.6px;height:17.2px;background:#4ab3e8;border-radius:3.5px;box-shadow:inset 0 0 0 0.7px rgba(0,0,0,0.25)"></div>
<div class="t" style="left:715.99px;top:807.14px;font-size:10.47px;color:#262626;transform:scaleX(0.9467);transform-origin:center;">Sources &amp; Uses</div>
<div class="a" style="left:800px;top:803px;width:39.9px;height:17.2px;background:#4ab3e8;border-radius:3.5px;box-shadow:inset 0 0 0 0.7px rgba(0,0,0,0.25)"></div>
<div class="t" style="left:805.12px;top:807.14px;font-size:10.47px;color:#262626;transform:scaleX(0.9467);transform-origin:center;">Ratios</div>
<div class="a" style="left:846.5px;top:803px;width:46.0px;height:17.2px;background:#4ab3e8;border-radius:3.5px;box-shadow:inset 0 0 0 0.7px rgba(0,0,0,0.25)"></div>
<div class="t" style="left:852.05px;top:807.14px;font-size:10.47px;color:#262626;transform:scaleX(0.9467);transform-origin:center;">DuPont</div>
<div class="a" style="left:130.2px;top:806px;width:1px;height:11px;background:#262626"></div>
<div class="a" style="left:177.8px;top:806px;width:1px;height:11px;background:#262626"></div>
<div class="a" style="left:238.4px;top:806px;width:1px;height:11px;background:#262626"></div>
<div class="a" style="left:287.8px;top:806px;width:1px;height:11px;background:#262626"></div>
<div class="a" style="left:313.9px;top:806px;width:1px;height:11px;background:#262626"></div>
<div class="a" style="left:343.2px;top:806px;width:1px;height:11px;background:#262626"></div>
<div class="a" style="left:372.4px;top:806px;width:1px;height:11px;background:#262626"></div>
<div class="a" style="left:433.2px;top:806px;width:1px;height:11px;background:#262626"></div>
<div class="a" style="left:495.0px;top:806px;width:1px;height:11px;background:#262626"></div>
<div class="a" style="left:555.6px;top:806px;width:1px;height:11px;background:#262626"></div>
<div class="a" style="left:584.9px;top:806px;width:1px;height:11px;background:#262626"></div>
<div class="a" style="left:625.8px;top:806px;width:1px;height:11px;background:#262626"></div>
<div class="a" style="left:672.2px;top:806px;width:1px;height:11px;background:#262626"></div>
<div class="a" style="left:709.5px;top:806px;width:1px;height:11px;background:#262626"></div>
<div class="a" style="left:796.4px;top:806px;width:1px;height:11px;background:#262626"></div>
<div class="a" style="left:842.7px;top:806px;width:1px;height:11px;background:#262626"></div>
<div class="t" style="left:902.51px;top:805.34px;font-size:10.47px;color:#222;transform:scaleX(0.9399);transform-origin:center;">Top_Revenue</div>
<div class="a" style="left:904.5px;top:816.6px;width:60.5px;height:1.6px;background:#1e8a3e"></div>
<div class="a" style="left:977px;top:803px;width:20px;height:17.2px;background:#4ab3e8;border-radius:3.5px"></div>
<div class="t" style="left:985.00px;top:806.66px;font-size:10.32px;color:#2a2a2a;">To</div>
<div class="a" style="left:992.3px;top:800px;width:391px;height:22.6px;background:#0d0d0d"></div>
<svg class="a" style="left:20px;top:806px" width="60" height="11" viewBox="0 0 60 11"><path d="M6 1.5 L2.5 5.5 L6 9.5" stroke="#d0d0d0" stroke-width="1.1" fill="none"/><path d="M25.5 1.5 L29 5.5 L25.5 9.5" stroke="#d0d0d0" stroke-width="1.1" fill="none"/><circle cx="46.5" cy="5.3" r="1.1" fill="#e0e0e0"/><circle cx="49.8" cy="5.3" r="1.1" fill="#e0e0e0"/><circle cx="53.1" cy="5.3" r="1.1" fill="#e0e0e0"/></svg>
<svg class="a" style="left:996px;top:805px" width="60" height="13" viewBox="0 0 60 13"><circle cx="4.5" cy="6" r="1.1" fill="#e0e0e0"/><circle cx="7.8" cy="6" r="1.1" fill="#e0e0e0"/><circle cx="11.1" cy="6" r="1.1" fill="#e0e0e0"/><path d="M30.2 1.5 V10.5 M25.7 6 H34.7" stroke="#e0e0e0" stroke-width="1.1"/><circle cx="54" cy="2.5" r="1" fill="#e0e0e0"/><circle cx="54" cy="6" r="1" fill="#e0e0e0"/><circle cx="54" cy="9.5" r="1" fill="#e0e0e0"/></svg>
<svg class="a" style="left:1063px;top:806px" width="8" height="10" viewBox="0 0 8 10"><path d="M1.5 5 L6.5 1 V9 Z" fill="#8a8a8a"/></svg>
<div class="a" style="left:1074px;top:808px;width:245px;height:6px;border-radius:3px;background:#9e9e9e"></div>
<svg class="a" style="left:1360px;top:806px" width="8" height="10" viewBox="0 0 8 10"><path d="M6.5 5 L1.5 1 V9 Z" fill="#8a8a8a"/></svg>
<div class="a" style="left:5px;top:822.6px;width:1379px;height:15.5px;background:#181818"></div>
<div class="t" style="left:12.90px;top:828.26px;font-size:7.85px;color:#c8c8c8;transform:scaleX(0.9036);transform-origin:left;">Ready</div>
<svg class="a" style="left:47px;top:826px" width="12" height="11" viewBox="0 0 12 11"><rect x="0.8" y="0.8" width="9" height="8.5" rx="1" stroke="#bdbdbd" stroke-width="1" fill="none"/><path d="M0.8 3 H9.8" stroke="#bdbdbd"/><circle cx="7.5" cy="7" r="3" fill="#181818" stroke="#d0d0d0" stroke-width="1"/><circle cx="7.5" cy="7" r="1.2" fill="#d0d0d0"/></svg>
<svg class="a" style="left:69px;top:826px" width="12" height="11" viewBox="0 0 12 11"><circle cx="5" cy="1.8" r="1.2" stroke="#d0d0d0" stroke-width="0.9" fill="none"/><path d="M1 4 H9 M5 3 V6.5 L2.5 10 M5 6.5 L6 8 M7 7 L10.5 10.5 M10.5 7 L7 10.5" stroke="#d0d0d0" stroke-width="0.9" fill="none"/></svg>
<div class="t" style="left:83.20px;top:827.66px;font-size:8.43px;color:#e6e6e6;font-weight:bold;transform:scaleX(0.8886);transform-origin:left;">Accessibility: Investigate</div>
<div class="a" style="left:1172.4px;top:823px;width:27.3px;height:15px;background:#2c2c2c"></div>
<svg class="a" style="left:1179px;top:825px" width="12" height="11" viewBox="0 0 12 11"><path d="M1 0.5 H11 V10.5 H1 Z M1 3.8 H11 M1 7.2 H11 M4.3 0.5 V10.5 M7.7 0.5 V10.5" stroke="#e0e0e0" stroke-width="1" fill="none"/></svg>
<svg class="a" style="left:1208px;top:825px" width="12" height="11" viewBox="0 0 12 11"><rect x="1" y="0.8" width="10" height="9.5" stroke="#cfcfcf" stroke-width="1" fill="none"/><path d="M3.3 2.3 V8.8 M8.7 2.3 V8.8" stroke="#cfcfcf" stroke-width="1"/></svg>
<svg class="a" style="left:1237px;top:825px" width="12" height="11" viewBox="0 0 12 11"><rect x="1" y="0.8" width="10" height="9.5" stroke="#cfcfcf" stroke-width="1" fill="none"/><path d="M4.5 0.8 V5.5 H11" stroke="#cfcfcf" stroke-width="1" fill="none"/></svg>
<div class="a" style="left:1261.3px;top:830.2px;width:4.6px;height:1px;background:#9a9a9a"></div>
<div class="a" style="left:1270.5px;top:830.3px;width:71.5px;height:1.2px;background:#8a8a8a"></div>
<div class="a" style="left:1305.5px;top:828px;width:1px;height:5px;background:#8a8a8a"></div>
<div class="a" style="left:1309px;top:826.5px;width:4px;height:8.5px;background:#b8b8b8;border-radius:1px"></div>
<div class="a" style="left:1345.7px;top:830.2px;width:5.3px;height:1px;background:#9a9a9a"></div><div class="a" style="left:1347.9px;top:828px;width:1px;height:5.3px;background:#9a9a9a"></div>
<div class="t" style="left:1360.60px;top:827.16px;font-size:7.85px;color:#d0d0d0;transform:scaleX(0.9067);transform-origin:left;">140%</div>
</body></html>
